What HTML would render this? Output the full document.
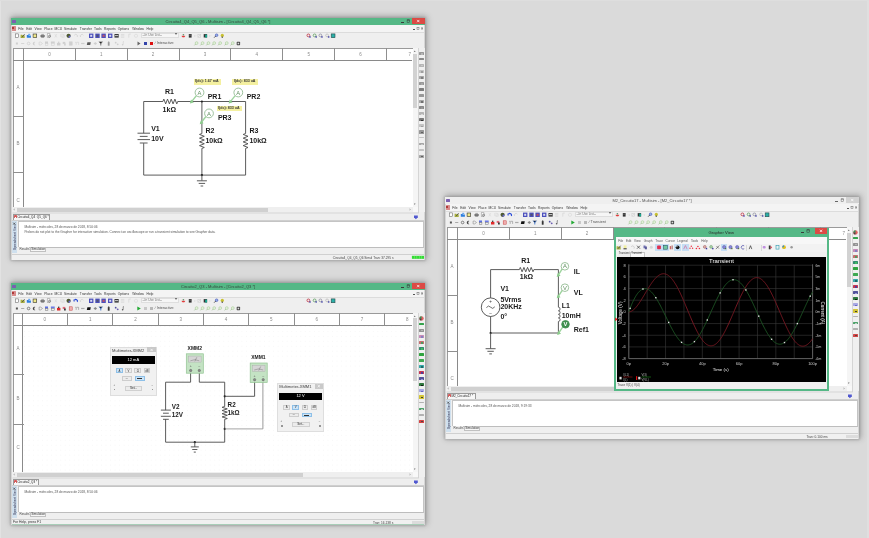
<!DOCTYPE html>
<html><head><meta charset="utf-8"><style>
html,body{margin:0;padding:0;}
body{width:869px;height:538px;overflow:hidden;position:relative;background:#dadada;font-family:"Liberation Sans", sans-serif;}
#ui{position:absolute;left:0;top:0;width:869px;height:538px;will-change:transform;-webkit-font-smoothing:antialiased;}
#ui div{position:absolute;box-sizing:border-box;}
svg{position:absolute;left:0;top:0;}
body > svg{will-change:transform;}
svg text{font-family:"Liberation Sans", sans-serif;}
</style></head><body>
<div id="ui">
<div style="left:866.5px;top:0px;width:2.5px;height:538px;background:#dfdfdf;"></div>
<div style="left:0px;top:0px;width:1.2px;height:538px;background:#e2e2e2;"></div>
<div style="left:0px;top:0px;width:869px;height:1px;background:#dedede;"></div>
<div style="left:11px;top:18px;width:414px;height:242px;background:#f0f0f0;box-shadow:0 0 2px 1px rgba(0,0,0,0.12), 1px -1px 6px 1px rgba(0,0,0,0.26);"></div>
<div style="left:11px;top:18px;width:414px;height:7px;background:#55b886;"></div>
<div style="left:18.0px;width:400px;text-align:center;top:19.82px;font-size:4.05px;line-height:4.05px;color:#35463c;font-weight:normal;white-space:nowrap;">Circuito4_Q4_Q5_Q6 - Multisim - [Circuito4_Q4_Q5_Q6 *]</div>
<div style="left:12.3px;top:19.6px;width:3.4px;height:3.4px;background:#7b5fb0;border-radius:0.6px;"></div>
<div style="left:401px;top:22.0px;width:2.6px;height:0.6px;background:#3a3a3a;"></div>
<div style="left:412px;top:18px;width:12.6px;height:6.0px;background:#dc4a45;"></div>
<div style="left:11px;top:25px;width:414px;height:235px;border:0.6px solid #d6d6d6;border-top:none;box-sizing:border-box;"></div>
<div style="left:12px;top:25px;width:412px;height:6.6px;background:#f4f4f4;"></div>
<div style="left:12.2px;top:26.3px;width:3.6px;height:4.4px;background:#d88a8a;border-radius:0.5px;"></div>
<div style="left:12.4px;top:26.5px;width:2px;height:2.5px;background:#b03a3a;"></div>
<div style="left:18.3px;top:27.71px;font-size:3.3px;line-height:3.3px;color:#333;font-weight:normal;white-space:nowrap;">File</div>
<div style="left:26.3px;top:27.71px;font-size:3.3px;line-height:3.3px;color:#333;font-weight:normal;white-space:nowrap;">Edit</div>
<div style="left:34.6px;top:27.71px;font-size:3.3px;line-height:3.3px;color:#333;font-weight:normal;white-space:nowrap;">View</div>
<div style="left:44.3px;top:27.71px;font-size:3.3px;line-height:3.3px;color:#333;font-weight:normal;white-space:nowrap;">Place</div>
<div style="left:54.5px;top:27.71px;font-size:3.3px;line-height:3.3px;color:#333;font-weight:normal;white-space:nowrap;">MCU</div>
<div style="left:64.1px;top:27.71px;font-size:3.3px;line-height:3.3px;color:#333;font-weight:normal;white-space:nowrap;">Simulate</div>
<div style="left:79.8px;top:27.71px;font-size:3.3px;line-height:3.3px;color:#333;font-weight:normal;white-space:nowrap;">Transfer</div>
<div style="left:94px;top:27.71px;font-size:3.3px;line-height:3.3px;color:#333;font-weight:normal;white-space:nowrap;">Tools</div>
<div style="left:104px;top:27.71px;font-size:3.3px;line-height:3.3px;color:#333;font-weight:normal;white-space:nowrap;">Reports</div>
<div style="left:117.7px;top:27.71px;font-size:3.3px;line-height:3.3px;color:#333;font-weight:normal;white-space:nowrap;">Options</div>
<div style="left:132.2px;top:27.71px;font-size:3.3px;line-height:3.3px;color:#333;font-weight:normal;white-space:nowrap;">Window</div>
<div style="left:146.5px;top:27.71px;font-size:3.3px;line-height:3.3px;color:#333;font-weight:normal;white-space:nowrap;">Help</div>
<div style="left:413px;top:29.4px;width:1.8px;height:0.6px;background:#555;"></div>
<div style="left:12px;top:31.6px;width:412px;height:16px;background:#efefef;"></div>
<div style="left:12px;top:31.6px;width:412px;height:0.6px;background:#dcdcdc;"></div>
<div style="left:140.5px;top:32.6px;width:38px;height:5.6px;background:#f6f6f6;border:0.5px solid #dedede;box-sizing:border-box;"></div>
<div style="left:142.5px;top:33.52px;font-size:3.2px;line-height:3.2px;color:#777;font-weight:normal;white-space:nowrap;">--In Use List--</div>
<div style="left:174.5px;top:33.08px;font-size:3.6px;line-height:3.6px;color:#555;font-weight:normal;white-space:nowrap;">&#9662;</div>
<div style="left:143.5px;top:41.6px;width:3.6px;height:3.6px;background:#3344aa;"></div>
<div style="left:149.5px;top:41.6px;width:3.6px;height:3.6px;background:#dd1111;"></div>
<div style="left:155px;top:41.77px;font-size:3.7px;line-height:3.7px;color:#555;font-weight:normal;white-space:nowrap;">&#8725; Interactive</div>
<div style="left:12px;top:47.6px;width:412px;height:160px;background:#f0f0f0;"></div>
<div style="left:12.5px;top:48px;width:400.29999999999995px;height:158.8px;background:#fff;border:0.8px solid #9a9a9a;border-right:none;border-bottom:none;box-sizing:border-box;"></div>
<div style="left:12.5px;top:59.5px;width:399.9px;height:1px;background:#8a8a8a;"></div>
<div style="left:23.0px;top:48px;width:1px;height:158.8px;background:#8a8a8a;"></div>
<div style="left:23.0px;top:48px;width:1px;height:12px;background:#8f8f8f;"></div>
<div style="left:-150.575px;width:400px;text-align:center;top:53.07px;font-size:4.5px;line-height:4.5px;color:#8a8a8a;font-weight:normal;white-space:nowrap;">0</div>
<div style="left:74.85px;top:48px;width:1px;height:12px;background:#8f8f8f;"></div>
<div style="left:-98.72500000000001px;width:400px;text-align:center;top:53.07px;font-size:4.5px;line-height:4.5px;color:#8a8a8a;font-weight:normal;white-space:nowrap;">1</div>
<div style="left:126.7px;top:48px;width:1px;height:12px;background:#8f8f8f;"></div>
<div style="left:-46.875px;width:400px;text-align:center;top:53.07px;font-size:4.5px;line-height:4.5px;color:#8a8a8a;font-weight:normal;white-space:nowrap;">2</div>
<div style="left:178.55px;top:48px;width:1px;height:12px;background:#8f8f8f;"></div>
<div style="left:4.975000000000023px;width:400px;text-align:center;top:53.07px;font-size:4.5px;line-height:4.5px;color:#8a8a8a;font-weight:normal;white-space:nowrap;">3</div>
<div style="left:230.4px;top:48px;width:1px;height:12px;background:#8f8f8f;"></div>
<div style="left:56.82499999999999px;width:400px;text-align:center;top:53.07px;font-size:4.5px;line-height:4.5px;color:#8a8a8a;font-weight:normal;white-space:nowrap;">4</div>
<div style="left:282.25px;top:48px;width:1px;height:12px;background:#8f8f8f;"></div>
<div style="left:108.67500000000001px;width:400px;text-align:center;top:53.07px;font-size:4.5px;line-height:4.5px;color:#8a8a8a;font-weight:normal;white-space:nowrap;">5</div>
<div style="left:334.1px;top:48px;width:1px;height:12px;background:#8f8f8f;"></div>
<div style="left:160.52500000000003px;width:400px;text-align:center;top:53.07px;font-size:4.5px;line-height:4.5px;color:#8a8a8a;font-weight:normal;white-space:nowrap;">6</div>
<div style="left:385.95px;top:48px;width:1px;height:12px;background:#8f8f8f;"></div>
<div style="left:408.4px;top:53.07px;font-size:4.5px;line-height:4.5px;color:#8a8a8a;font-weight:normal;white-space:nowrap;">7</div>
<div style="left:-182px;width:400px;text-align:center;top:85.77px;font-size:4.5px;line-height:4.5px;color:#8a8a8a;font-weight:normal;white-space:nowrap;">A</div>
<div style="left:12.5px;top:115.9px;width:11px;height:1px;background:#8f8f8f;"></div>
<div style="left:-182px;width:400px;text-align:center;top:142.17px;font-size:4.5px;line-height:4.5px;color:#8a8a8a;font-weight:normal;white-space:nowrap;">B</div>
<div style="left:12.5px;top:172.3px;width:11px;height:1px;background:#8f8f8f;"></div>
<div style="left:-182px;width:400px;text-align:center;top:198.57px;font-size:4.5px;line-height:4.5px;color:#8a8a8a;font-weight:normal;white-space:nowrap;">C</div>
<div style="left:412.8px;top:48px;width:5.6px;height:159px;background:#f5f5f5;"></div>
<div style="left:413.3px;top:53.5px;width:4.2px;height:54.5px;background:#d2d2d2;"></div>
<div style="left:413.6px;top:49.50px;font-size:3.4px;line-height:3.4px;color:#666;font-weight:normal;white-space:nowrap;">&#9652;</div>
<div style="left:413.6px;top:203.20px;font-size:3.4px;line-height:3.4px;color:#666;font-weight:normal;white-space:nowrap;">&#9662;</div>
<div style="left:418px;top:48px;width:7px;height:164px;background:#f0f0f0;"></div>
<div style="left:419.4px;top:51.5px;width:4.2px;height:3.4px;background:#8a8a8a;border-radius:0.5px;opacity:0.85;"></div>
<div style="left:420.6px;top:53.03px;width:2.4px;height:1.53px;background:#bbb;opacity:0.85;"></div>
<div style="left:419.4px;top:58.15px;width:4.2px;height:2.2px;background:#777;border-radius:0.5px;opacity:0.85;"></div>
<div style="left:419.4px;top:63.8px;width:4.2px;height:3px;background:#aaa;border-radius:0.5px;opacity:0.85;"></div>
<div style="left:420.6px;top:65.14999999999999px;width:2.4px;height:1.35px;background:#ccc;opacity:0.85;"></div>
<div style="left:419.4px;top:69.85px;width:4.2px;height:3px;background:#bbb;border-radius:0.5px;opacity:0.85;"></div>
<div style="left:420.6px;top:71.19999999999999px;width:2.4px;height:1.35px;background:#999;opacity:0.85;"></div>
<div style="left:419.4px;top:75.9px;width:4.2px;height:3px;background:#999;border-radius:0.5px;opacity:0.85;"></div>
<div style="left:420.6px;top:77.25px;width:2.4px;height:1.35px;background:#777;opacity:0.85;"></div>
<div style="left:419.4px;top:81.95px;width:4.2px;height:3px;background:#888;border-radius:0.5px;opacity:0.85;"></div>
<div style="left:420.6px;top:83.3px;width:2.4px;height:1.35px;background:#aaa;opacity:0.85;"></div>
<div style="left:419.4px;top:88.2px;width:4.2px;height:2.6px;background:#6a6a6a;border-radius:0.5px;opacity:0.85;"></div>
<div style="left:419.4px;top:94.25000000000001px;width:4.2px;height:2.6px;background:#888;border-radius:0.5px;opacity:0.85;"></div>
<div style="left:419.4px;top:100.0px;width:4.2px;height:3.2px;background:#9a9a9a;border-radius:0.5px;opacity:0.85;"></div>
<div style="left:420.6px;top:101.44px;width:2.4px;height:1.4400000000000002px;background:#666;opacity:0.85;"></div>
<div style="left:419.4px;top:105.95px;width:4.2px;height:3.4px;background:#777;border-radius:0.5px;opacity:0.85;"></div>
<div style="left:420.6px;top:107.48px;width:2.4px;height:1.53px;background:#999;opacity:0.85;"></div>
<div style="left:419.4px;top:112.2px;width:4.2px;height:3px;background:#aaa;border-radius:0.5px;opacity:0.85;"></div>
<div style="left:420.6px;top:113.55px;width:2.4px;height:1.35px;background:#ddd;opacity:0.85;"></div>
<div style="left:419.4px;top:118.35px;width:4.2px;height:2.8px;background:#666;border-radius:0.5px;opacity:0.85;"></div>
<div style="left:420.6px;top:119.61px;width:2.4px;height:1.26px;background:#222;opacity:0.85;"></div>
<div style="left:419.4px;top:124.3px;width:4.2px;height:3px;background:#bbb;border-radius:0.5px;opacity:0.85;"></div>
<div style="left:420.6px;top:125.64999999999999px;width:2.4px;height:1.35px;background:#999;opacity:0.85;"></div>
<div style="left:419.4px;top:130.15px;width:4.2px;height:3.4px;background:#888;border-radius:0.5px;opacity:0.85;"></div>
<div style="left:420.6px;top:131.68px;width:2.4px;height:1.53px;background:#555;opacity:0.85;"></div>
<div style="left:419.4px;top:137.3px;width:4.2px;height:1.2px;background:#bbb;border-radius:0.5px;opacity:0.85;"></div>
<div style="left:419.4px;top:142.95px;width:4.2px;height:2px;background:#999;border-radius:0.5px;opacity:0.85;"></div>
<div style="left:420.6px;top:143.85px;width:2.4px;height:0.9px;background:#ccc;opacity:0.85;"></div>
<div style="left:419.4px;top:149.4px;width:4.2px;height:1.2px;background:#bbb;border-radius:0.5px;opacity:0.85;"></div>
<div style="left:419.4px;top:154.55px;width:4.2px;height:3px;background:#999;border-radius:0.5px;opacity:0.85;"></div>
<div style="left:420.6px;top:155.9px;width:2.4px;height:1.35px;background:#555;opacity:0.85;"></div>
<div style="left:12.5px;top:206.8px;width:405.8px;height:6px;background:#efefef;"></div>
<div style="left:412.8px;top:207px;width:5.4px;height:5.6px;background:#f8f8f8;"></div>
<div style="left:17px;top:207.6px;width:251px;height:4.4px;background:#d0d0d0;"></div>
<div style="left:13.5px;top:207.71px;font-size:4.2px;line-height:4.2px;color:#666;font-weight:normal;white-space:nowrap;">&#8249;</div>
<div style="left:409.2px;top:207.71px;font-size:4.2px;line-height:4.2px;color:#666;font-weight:normal;white-space:nowrap;">&#8250;</div>
<div style="left:12px;top:212px;width:412px;height:8px;background:#eeeeee;"></div>
<div style="left:12px;top:219.8px;width:412px;height:0.6px;background:#cfcfcf;"></div>
<div style="left:13px;top:213.6px;width:37px;height:6.4px;background:#f7f7f7;border:0.6px solid #9a9a9a;border-bottom:none;box-sizing:border-box;"></div>
<div style="left:14px;top:214.5px;width:2.6px;height:3.8px;background:#d45a5a;border-radius:0.4px;"></div>
<div style="left:14.8px;top:216.6px;width:1.6px;height:1.6px;background:#fff;"></div>
<div style="left:17.4px;top:215.64px;font-size:3.05px;line-height:3.05px;color:#1a1a1a;font-weight:normal;white-space:nowrap;">Circuito4_Q4_Q5_Q6 *</div>
<div style="left:12px;top:220.6px;width:412px;height:34px;background:#efefef;"></div>
<div style="left:12px;top:221px;width:4.8px;height:32px;background:#cfe0ee;"></div>
<div style="left:-1.4000000000000004px;top:234.5px;width:31px;height:4px;font-size:3.2px;line-height:4px;color:#224;transform:rotate(-90deg);text-align:center;white-space:nowrap;">Spreadsheet View</div>
<div style="left:18px;top:221px;width:405.5px;height:26.6px;background:#fff;border:0.6px solid #c4c4c4;border-bottom:0.9px solid #bdbdbd;box-sizing:border-box;"></div>
<div style="left:24.4px;top:225.52px;font-size:3.22px;line-height:3.22px;color:#555;font-weight:normal;white-space:nowrap;">Multisim  -  mi&#233;rcoles, 28 de marzo de 2018, 8:50:06</div>
<div style="left:24.4px;top:231.32px;font-size:3.22px;line-height:3.22px;color:#555;font-weight:normal;white-space:nowrap;">Probes do not plot to the Grapher for interactive simulation. Connect an oscilloscope or run a transient simulation to see Grapher data.</div>
<div style="left:18px;top:247.2px;width:11px;height:5px;background:#efefef;"></div>
<div style="left:19.5px;top:248.45px;font-size:3.0px;line-height:3.0px;color:#444;font-weight:normal;white-space:nowrap;">Results</div>
<div style="left:29.5px;top:247px;width:16px;height:5.2px;background:#f7f7f7;border:0.6px solid #c0c0c0;box-sizing:border-box;"></div>
<div style="left:31.2px;top:248.25px;font-size:3.0px;line-height:3.0px;color:#333;font-weight:normal;white-space:nowrap;">Simulation</div>
<div style="left:12px;top:253.9px;width:412px;height:0.8px;background:#d0d0d0;"></div>
<div style="left:12px;top:254.6px;width:412px;height:5.4px;background:#f0f0f0;"></div>
<div style="left:332.8px;top:256.62px;font-size:3.2px;line-height:3.2px;color:#444;font-weight:normal;white-space:nowrap;">Circuito4_Q4_Q5_Q6  Simul Tran: 37.295 s</div>
<div style="left:412px;top:255.7px;width:12.2px;height:3.0px;background:#dcdcdc;"></div>
<div style="left:11px;top:283px;width:414px;height:242px;background:#f0f0f0;box-shadow:0 0 2px 1px rgba(0,0,0,0.12), 1px -1px 6px 1px rgba(0,0,0,0.26);"></div>
<div style="left:11px;top:283px;width:414px;height:7px;background:#55b886;"></div>
<div style="left:18.0px;width:400px;text-align:center;top:284.82px;font-size:4.05px;line-height:4.05px;color:#35463c;font-weight:normal;white-space:nowrap;">Circuito2_Q3 - Multisim - [Circuito2_Q3 *]</div>
<div style="left:12.3px;top:284.6px;width:3.4px;height:3.4px;background:#7b5fb0;border-radius:0.6px;"></div>
<div style="left:401px;top:287.0px;width:2.6px;height:0.6px;background:#3a3a3a;"></div>
<div style="left:412px;top:283px;width:12.6px;height:6.0px;background:#dc4a45;"></div>
<div style="left:11px;top:290px;width:414px;height:235px;border:0.6px solid #d6d6d6;border-top:none;box-sizing:border-box;"></div>
<div style="left:12px;top:290px;width:412px;height:6.6px;background:#f4f4f4;"></div>
<div style="left:12.2px;top:291.3px;width:3.6px;height:4.4px;background:#d88a8a;border-radius:0.5px;"></div>
<div style="left:12.4px;top:291.5px;width:2px;height:2.5px;background:#b03a3a;"></div>
<div style="left:18.3px;top:292.71px;font-size:3.3px;line-height:3.3px;color:#333;font-weight:normal;white-space:nowrap;">File</div>
<div style="left:26.3px;top:292.71px;font-size:3.3px;line-height:3.3px;color:#333;font-weight:normal;white-space:nowrap;">Edit</div>
<div style="left:34.6px;top:292.71px;font-size:3.3px;line-height:3.3px;color:#333;font-weight:normal;white-space:nowrap;">View</div>
<div style="left:44.3px;top:292.71px;font-size:3.3px;line-height:3.3px;color:#333;font-weight:normal;white-space:nowrap;">Place</div>
<div style="left:54.5px;top:292.71px;font-size:3.3px;line-height:3.3px;color:#333;font-weight:normal;white-space:nowrap;">MCU</div>
<div style="left:64.1px;top:292.71px;font-size:3.3px;line-height:3.3px;color:#333;font-weight:normal;white-space:nowrap;">Simulate</div>
<div style="left:79.8px;top:292.71px;font-size:3.3px;line-height:3.3px;color:#333;font-weight:normal;white-space:nowrap;">Transfer</div>
<div style="left:94px;top:292.71px;font-size:3.3px;line-height:3.3px;color:#333;font-weight:normal;white-space:nowrap;">Tools</div>
<div style="left:104px;top:292.71px;font-size:3.3px;line-height:3.3px;color:#333;font-weight:normal;white-space:nowrap;">Reports</div>
<div style="left:117.7px;top:292.71px;font-size:3.3px;line-height:3.3px;color:#333;font-weight:normal;white-space:nowrap;">Options</div>
<div style="left:132.2px;top:292.71px;font-size:3.3px;line-height:3.3px;color:#333;font-weight:normal;white-space:nowrap;">Window</div>
<div style="left:146.5px;top:292.71px;font-size:3.3px;line-height:3.3px;color:#333;font-weight:normal;white-space:nowrap;">Help</div>
<div style="left:413px;top:294.4px;width:1.8px;height:0.6px;background:#555;"></div>
<div style="left:12px;top:296.6px;width:412px;height:16px;background:#efefef;"></div>
<div style="left:12px;top:296.6px;width:412px;height:0.6px;background:#dcdcdc;"></div>
<div style="left:140.5px;top:297.6px;width:38px;height:5.6px;background:#f6f6f6;border:0.5px solid #dedede;box-sizing:border-box;"></div>
<div style="left:142.5px;top:298.52px;font-size:3.2px;line-height:3.2px;color:#777;font-weight:normal;white-space:nowrap;">--In Use List--</div>
<div style="left:174.5px;top:298.08px;font-size:3.6px;line-height:3.6px;color:#555;font-weight:normal;white-space:nowrap;">&#9662;</div>
<div style="left:143.8px;top:306.8px;width:3.2px;height:3.2px;background:#c8c8c8;"></div>
<div style="left:149.8px;top:306.8px;width:3.2px;height:3.2px;background:#b8b8b8;"></div>
<div style="left:155px;top:306.77px;font-size:3.7px;line-height:3.7px;color:#555;font-weight:normal;white-space:nowrap;">&#8725; Interactive</div>
<div style="left:12px;top:312.6px;width:412px;height:160px;background:#f0f0f0;"></div>
<div style="left:12.5px;top:313px;width:400.29999999999995px;height:158.8px;background:#fff;border:0.8px solid #9a9a9a;border-right:none;border-bottom:none;box-sizing:border-box;"></div>
<div style="left:23.5px;top:325.5px;width:387.9px;height:145.8px;"><svg width="387.9" height="145.8"><rect x="0" y="0" width="387.9" height="145.8" fill="url(#gdots)"/></svg></div>
<div style="left:12.5px;top:324.5px;width:399.9px;height:1px;background:#8a8a8a;"></div>
<div style="left:21.7px;top:313px;width:1px;height:158.8px;background:#8a8a8a;"></div>
<div style="left:21.7px;top:313px;width:1px;height:12px;background:#8f8f8f;"></div>
<div style="left:-155.15px;width:400px;text-align:center;top:318.07px;font-size:4.5px;line-height:4.5px;color:#8a8a8a;font-weight:normal;white-space:nowrap;">0</div>
<div style="left:67.0px;top:313px;width:1px;height:12px;background:#8f8f8f;"></div>
<div style="left:-109.85px;width:400px;text-align:center;top:318.07px;font-size:4.5px;line-height:4.5px;color:#8a8a8a;font-weight:normal;white-space:nowrap;">1</div>
<div style="left:112.3px;top:313px;width:1px;height:12px;background:#8f8f8f;"></div>
<div style="left:-64.55000000000001px;width:400px;text-align:center;top:318.07px;font-size:4.5px;line-height:4.5px;color:#8a8a8a;font-weight:normal;white-space:nowrap;">2</div>
<div style="left:157.59999999999997px;top:313px;width:1px;height:12px;background:#8f8f8f;"></div>
<div style="left:-19.25000000000003px;width:400px;text-align:center;top:318.07px;font-size:4.5px;line-height:4.5px;color:#8a8a8a;font-weight:normal;white-space:nowrap;">3</div>
<div style="left:202.89999999999998px;top:313px;width:1px;height:12px;background:#8f8f8f;"></div>
<div style="left:26.049999999999983px;width:400px;text-align:center;top:318.07px;font-size:4.5px;line-height:4.5px;color:#8a8a8a;font-weight:normal;white-space:nowrap;">4</div>
<div style="left:248.2px;top:313px;width:1px;height:12px;background:#8f8f8f;"></div>
<div style="left:71.34999999999997px;width:400px;text-align:center;top:318.07px;font-size:4.5px;line-height:4.5px;color:#8a8a8a;font-weight:normal;white-space:nowrap;">5</div>
<div style="left:293.49999999999994px;top:313px;width:1px;height:12px;background:#8f8f8f;"></div>
<div style="left:116.64999999999992px;width:400px;text-align:center;top:318.07px;font-size:4.5px;line-height:4.5px;color:#8a8a8a;font-weight:normal;white-space:nowrap;">6</div>
<div style="left:338.79999999999995px;top:313px;width:1px;height:12px;background:#8f8f8f;"></div>
<div style="left:161.94999999999993px;width:400px;text-align:center;top:318.07px;font-size:4.5px;line-height:4.5px;color:#8a8a8a;font-weight:normal;white-space:nowrap;">7</div>
<div style="left:384.09999999999997px;top:313px;width:1px;height:12px;background:#8f8f8f;"></div>
<div style="left:207.24999999999994px;width:400px;text-align:center;top:318.07px;font-size:4.5px;line-height:4.5px;color:#8a8a8a;font-weight:normal;white-space:nowrap;">8</div>
<div style="left:-182px;width:400px;text-align:center;top:347.32px;font-size:4.5px;line-height:4.5px;color:#8a8a8a;font-weight:normal;white-space:nowrap;">A</div>
<div style="left:12.5px;top:374.0px;width:11px;height:1px;background:#8f8f8f;"></div>
<div style="left:-182px;width:400px;text-align:center;top:396.82px;font-size:4.5px;line-height:4.5px;color:#8a8a8a;font-weight:normal;white-space:nowrap;">B</div>
<div style="left:12.5px;top:423.5px;width:11px;height:1px;background:#8f8f8f;"></div>
<div style="left:-182px;width:400px;text-align:center;top:446.32px;font-size:4.5px;line-height:4.5px;color:#8a8a8a;font-weight:normal;white-space:nowrap;">C</div>
<div style="left:412.8px;top:313px;width:5.6px;height:159px;background:#f5f5f5;"></div>
<div style="left:413.3px;top:317.5px;width:4.2px;height:63.5px;background:#d2d2d2;"></div>
<div style="left:413.6px;top:314.50px;font-size:3.4px;line-height:3.4px;color:#666;font-weight:normal;white-space:nowrap;">&#9652;</div>
<div style="left:413.6px;top:468.20px;font-size:3.4px;line-height:3.4px;color:#666;font-weight:normal;white-space:nowrap;">&#9662;</div>
<div style="left:418px;top:313px;width:7px;height:164px;background:#f0f0f0;"></div>
<div style="left:419.4px;top:323.15px;width:4.2px;height:2.2px;background:#1f9a3a;border-radius:0.5px;opacity:0.9;"></div>
<div style="left:419.4px;top:328.8px;width:4.2px;height:3px;background:#888;border-radius:0.5px;opacity:0.9;"></div>
<div style="left:420.6px;top:330.15000000000003px;width:2.4px;height:1.35px;background:#bbb;opacity:0.9;"></div>
<div style="left:419.4px;top:334.84999999999997px;width:4.2px;height:3px;background:#c080b0;border-radius:0.5px;opacity:0.9;"></div>
<div style="left:420.6px;top:336.2px;width:2.4px;height:1.35px;background:#8080c0;opacity:0.9;"></div>
<div style="left:419.4px;top:340.9px;width:4.2px;height:3px;background:#c06060;border-radius:0.5px;opacity:0.9;"></div>
<div style="left:420.6px;top:342.25px;width:2.4px;height:1.35px;background:#40a060;opacity:0.9;"></div>
<div style="left:419.4px;top:346.95px;width:4.2px;height:3px;background:#208060;border-radius:0.5px;opacity:0.9;"></div>
<div style="left:420.6px;top:348.3px;width:2.4px;height:1.35px;background:#40c060;opacity:0.9;"></div>
<div style="left:419.4px;top:353.2px;width:4.2px;height:2.6px;background:#1a9a2a;border-radius:0.5px;opacity:0.9;"></div>
<div style="left:419.4px;top:359.25px;width:4.2px;height:2.6px;background:#2aa040;border-radius:0.5px;opacity:0.9;"></div>
<div style="left:419.4px;top:364.99999999999994px;width:4.2px;height:3.2px;background:#20a0a0;border-radius:0.5px;opacity:0.9;"></div>
<div style="left:420.6px;top:366.43999999999994px;width:2.4px;height:1.4400000000000002px;background:#206060;opacity:0.9;"></div>
<div style="left:419.4px;top:370.95px;width:4.2px;height:3.4px;background:#c02040;border-radius:0.5px;opacity:0.9;"></div>
<div style="left:420.6px;top:372.47999999999996px;width:2.4px;height:1.53px;background:#4040a0;opacity:0.9;"></div>
<div style="left:419.4px;top:377.2px;width:4.2px;height:3px;background:#404090;border-radius:0.5px;opacity:0.9;"></div>
<div style="left:420.6px;top:378.55px;width:2.4px;height:1.35px;background:#a0a0e0;opacity:0.9;"></div>
<div style="left:419.4px;top:383.35px;width:4.2px;height:2.8px;background:#1a6a2a;border-radius:0.5px;opacity:0.9;"></div>
<div style="left:420.6px;top:384.61px;width:2.4px;height:1.26px;background:#111;opacity:0.9;"></div>
<div style="left:419.4px;top:389.29999999999995px;width:4.2px;height:3px;background:#a0a0e0;border-radius:0.5px;opacity:0.9;"></div>
<div style="left:420.6px;top:390.65px;width:2.4px;height:1.35px;background:#6060c0;opacity:0.9;"></div>
<div style="left:419.4px;top:395.15px;width:4.2px;height:3.4px;background:#d0c020;border-radius:0.5px;opacity:0.9;"></div>
<div style="left:420.6px;top:396.67999999999995px;width:2.4px;height:1.53px;background:#333;opacity:0.9;"></div>
<div style="left:419.4px;top:402.29999999999995px;width:4.2px;height:1.2px;background:#aaa;border-radius:0.5px;opacity:0.9;"></div>
<div style="left:419.4px;top:407.95px;width:4.2px;height:2px;background:#3a9a5a;border-radius:0.5px;opacity:0.9;"></div>
<div style="left:420.6px;top:408.84999999999997px;width:2.4px;height:0.9px;background:#ccc;opacity:0.9;"></div>
<div style="left:419.4px;top:414.4px;width:4.2px;height:1.2px;background:#aaa;border-radius:0.5px;opacity:0.9;"></div>
<div style="left:419.4px;top:419.54999999999995px;width:4.2px;height:3px;background:#d03030;border-radius:0.5px;opacity:0.9;"></div>
<div style="left:420.6px;top:420.9px;width:2.4px;height:1.35px;background:#444;opacity:0.9;"></div>
<div style="left:12.5px;top:471.8px;width:405.8px;height:6px;background:#efefef;"></div>
<div style="left:412.8px;top:472px;width:5.4px;height:5.6px;background:#f8f8f8;"></div>
<div style="left:17px;top:472.6px;width:286px;height:4.4px;background:#d0d0d0;"></div>
<div style="left:13.5px;top:472.71px;font-size:4.2px;line-height:4.2px;color:#666;font-weight:normal;white-space:nowrap;">&#8249;</div>
<div style="left:409.2px;top:472.71px;font-size:4.2px;line-height:4.2px;color:#666;font-weight:normal;white-space:nowrap;">&#8250;</div>
<div style="left:12px;top:477px;width:412px;height:8px;background:#eeeeee;"></div>
<div style="left:12px;top:484.8px;width:412px;height:0.6px;background:#cfcfcf;"></div>
<div style="left:13px;top:478.6px;width:26.3px;height:6.4px;background:#f7f7f7;border:0.6px solid #9a9a9a;border-bottom:none;box-sizing:border-box;"></div>
<div style="left:14px;top:479.5px;width:2.6px;height:3.8px;background:#d45a5a;border-radius:0.4px;"></div>
<div style="left:14.8px;top:481.6px;width:1.6px;height:1.6px;background:#fff;"></div>
<div style="left:17.4px;top:480.64px;font-size:3.05px;line-height:3.05px;color:#1a1a1a;font-weight:normal;white-space:nowrap;">Circuito2_Q3 *</div>
<div style="left:12px;top:485.6px;width:412px;height:34px;background:#efefef;"></div>
<div style="left:12px;top:486px;width:4.8px;height:32px;background:#cfe0ee;"></div>
<div style="left:-1.4000000000000004px;top:499.5px;width:31px;height:4px;font-size:3.2px;line-height:4px;color:#224;transform:rotate(-90deg);text-align:center;white-space:nowrap;">Spreadsheet View</div>
<div style="left:18px;top:486px;width:405.5px;height:26.6px;background:#fff;border:0.6px solid #c4c4c4;border-bottom:0.9px solid #bdbdbd;box-sizing:border-box;"></div>
<div style="left:24.4px;top:490.52px;font-size:3.22px;line-height:3.22px;color:#555;font-weight:normal;white-space:nowrap;">Multisim  -  mi&#233;rcoles, 28 de marzo de 2018, 8:50:06</div>
<div style="left:18px;top:512.2px;width:11px;height:5px;background:#efefef;"></div>
<div style="left:19.5px;top:513.45px;font-size:3.0px;line-height:3.0px;color:#444;font-weight:normal;white-space:nowrap;">Results</div>
<div style="left:29.5px;top:512px;width:16px;height:5.2px;background:#f7f7f7;border:0.6px solid #c0c0c0;box-sizing:border-box;"></div>
<div style="left:31.2px;top:513.25px;font-size:3.0px;line-height:3.0px;color:#333;font-weight:normal;white-space:nowrap;">Simulation</div>
<div style="left:12px;top:518.9px;width:412px;height:0.8px;background:#d0d0d0;"></div>
<div style="left:12px;top:519.6px;width:412px;height:5.4px;background:#f0f0f0;"></div>
<div style="left:13px;top:521.20px;font-size:3.4px;line-height:3.4px;color:#333;font-weight:normal;white-space:nowrap;">For Help, press F1</div>
<div style="left:372.9px;top:521.62px;font-size:3.2px;line-height:3.2px;color:#444;font-weight:normal;white-space:nowrap;">Tran: 16.138 s</div>
<div style="left:412px;top:520.7px;width:12.2px;height:3.0px;background:#dcdcdc;"></div>
<div style="left:12px;top:524.2px;width:412px;height:0.8px;background:#a8cdb8;"></div>
<div style="left:445px;top:197px;width:414px;height:242px;background:#f0f0f0;box-shadow:0 0 2px 1px rgba(0,0,0,0.12), 1px -1px 6px 1px rgba(0,0,0,0.26);"></div>
<div style="left:445px;top:197px;width:414px;height:7px;background:#efefef;"></div>
<div style="left:452.0px;width:400px;text-align:center;top:198.82px;font-size:4.05px;line-height:4.05px;color:#555;font-weight:normal;white-space:nowrap;">M2_Circuito17 - Multisim - [M2_Circuito17 *]</div>
<div style="left:446.3px;top:198.6px;width:3.4px;height:3.4px;background:#7b5fb0;border-radius:0.6px;"></div>
<div style="left:835px;top:201.0px;width:2.6px;height:0.6px;background:#666;"></div>
<div style="left:846px;top:197px;width:12.6px;height:6.0px;background:#d2d2d2;"></div>
<div style="left:445px;top:204px;width:414px;height:235px;border:0.6px solid #d6d6d6;border-top:none;box-sizing:border-box;"></div>
<div style="left:446px;top:204px;width:412px;height:6.6px;background:#f4f4f4;"></div>
<div style="left:446.2px;top:205.3px;width:3.6px;height:4.4px;background:#d88a8a;border-radius:0.5px;"></div>
<div style="left:446.4px;top:205.5px;width:2px;height:2.5px;background:#b03a3a;"></div>
<div style="left:452.3px;top:206.71px;font-size:3.3px;line-height:3.3px;color:#333;font-weight:normal;white-space:nowrap;">File</div>
<div style="left:460.3px;top:206.71px;font-size:3.3px;line-height:3.3px;color:#333;font-weight:normal;white-space:nowrap;">Edit</div>
<div style="left:468.6px;top:206.71px;font-size:3.3px;line-height:3.3px;color:#333;font-weight:normal;white-space:nowrap;">View</div>
<div style="left:478.3px;top:206.71px;font-size:3.3px;line-height:3.3px;color:#333;font-weight:normal;white-space:nowrap;">Place</div>
<div style="left:488.5px;top:206.71px;font-size:3.3px;line-height:3.3px;color:#333;font-weight:normal;white-space:nowrap;">MCU</div>
<div style="left:498.1px;top:206.71px;font-size:3.3px;line-height:3.3px;color:#333;font-weight:normal;white-space:nowrap;">Simulate</div>
<div style="left:513.8px;top:206.71px;font-size:3.3px;line-height:3.3px;color:#333;font-weight:normal;white-space:nowrap;">Transfer</div>
<div style="left:528px;top:206.71px;font-size:3.3px;line-height:3.3px;color:#333;font-weight:normal;white-space:nowrap;">Tools</div>
<div style="left:538px;top:206.71px;font-size:3.3px;line-height:3.3px;color:#333;font-weight:normal;white-space:nowrap;">Reports</div>
<div style="left:551.7px;top:206.71px;font-size:3.3px;line-height:3.3px;color:#333;font-weight:normal;white-space:nowrap;">Options</div>
<div style="left:566.2px;top:206.71px;font-size:3.3px;line-height:3.3px;color:#333;font-weight:normal;white-space:nowrap;">Window</div>
<div style="left:580.5px;top:206.71px;font-size:3.3px;line-height:3.3px;color:#333;font-weight:normal;white-space:nowrap;">Help</div>
<div style="left:847px;top:208.4px;width:1.8px;height:0.6px;background:#555;"></div>
<div style="left:446px;top:210.6px;width:412px;height:16px;background:#efefef;"></div>
<div style="left:446px;top:210.6px;width:412px;height:0.6px;background:#dcdcdc;"></div>
<div style="left:574.5px;top:211.6px;width:38px;height:5.6px;background:#f6f6f6;border:0.5px solid #dedede;box-sizing:border-box;"></div>
<div style="left:576.5px;top:212.52px;font-size:3.2px;line-height:3.2px;color:#777;font-weight:normal;white-space:nowrap;">--In Use List--</div>
<div style="left:608.5px;top:212.08px;font-size:3.6px;line-height:3.6px;color:#555;font-weight:normal;white-space:nowrap;">&#9662;</div>
<div style="left:577.8px;top:220.8px;width:3.2px;height:3.2px;background:#c8c8c8;"></div>
<div style="left:583.8px;top:220.8px;width:3.2px;height:3.2px;background:#b8b8b8;"></div>
<div style="left:589px;top:220.77px;font-size:3.7px;line-height:3.7px;color:#555;font-weight:normal;white-space:nowrap;">&#8725; Transient</div>
<div style="left:446px;top:226.6px;width:412px;height:160px;background:#f0f0f0;"></div>
<div style="left:446.5px;top:227px;width:400.29999999999995px;height:158.8px;background:#fff;border:0.8px solid #9a9a9a;border-right:none;border-bottom:none;box-sizing:border-box;"></div>
<div style="left:446.5px;top:238.5px;width:399.9px;height:1px;background:#8a8a8a;"></div>
<div style="left:457.0px;top:227px;width:1px;height:158.8px;background:#8a8a8a;"></div>
<div style="left:457.0px;top:227px;width:1px;height:12px;background:#8f8f8f;"></div>
<div style="left:283.425px;width:400px;text-align:center;top:232.07px;font-size:4.5px;line-height:4.5px;color:#8a8a8a;font-weight:normal;white-space:nowrap;">0</div>
<div style="left:508.85px;top:227px;width:1px;height:12px;background:#8f8f8f;"></div>
<div style="left:335.275px;width:400px;text-align:center;top:232.07px;font-size:4.5px;line-height:4.5px;color:#8a8a8a;font-weight:normal;white-space:nowrap;">1</div>
<div style="left:560.7px;top:227px;width:1px;height:12px;background:#8f8f8f;"></div>
<div style="left:387.125px;width:400px;text-align:center;top:232.07px;font-size:4.5px;line-height:4.5px;color:#8a8a8a;font-weight:normal;white-space:nowrap;">2</div>
<div style="left:612.55px;top:227px;width:1px;height:12px;background:#8f8f8f;"></div>
<div style="left:438.9749999999999px;width:400px;text-align:center;top:232.07px;font-size:4.5px;line-height:4.5px;color:#8a8a8a;font-weight:normal;white-space:nowrap;">3</div>
<div style="left:664.4px;top:227px;width:1px;height:12px;background:#8f8f8f;"></div>
<div style="left:490.82499999999993px;width:400px;text-align:center;top:232.07px;font-size:4.5px;line-height:4.5px;color:#8a8a8a;font-weight:normal;white-space:nowrap;">4</div>
<div style="left:716.25px;top:227px;width:1px;height:12px;background:#8f8f8f;"></div>
<div style="left:542.675px;width:400px;text-align:center;top:232.07px;font-size:4.5px;line-height:4.5px;color:#8a8a8a;font-weight:normal;white-space:nowrap;">5</div>
<div style="left:768.1px;top:227px;width:1px;height:12px;background:#8f8f8f;"></div>
<div style="left:594.525px;width:400px;text-align:center;top:232.07px;font-size:4.5px;line-height:4.5px;color:#8a8a8a;font-weight:normal;white-space:nowrap;">6</div>
<div style="left:819.95px;top:227px;width:1px;height:12px;background:#8f8f8f;"></div>
<div style="left:842.4px;top:232.07px;font-size:4.5px;line-height:4.5px;color:#8a8a8a;font-weight:normal;white-space:nowrap;">7</div>
<div style="left:252px;width:400px;text-align:center;top:264.72px;font-size:4.5px;line-height:4.5px;color:#8a8a8a;font-weight:normal;white-space:nowrap;">A</div>
<div style="left:446.5px;top:294.8px;width:11px;height:1px;background:#8f8f8f;"></div>
<div style="left:252px;width:400px;text-align:center;top:321.02px;font-size:4.5px;line-height:4.5px;color:#8a8a8a;font-weight:normal;white-space:nowrap;">B</div>
<div style="left:446.5px;top:351.1px;width:11px;height:1px;background:#8f8f8f;"></div>
<div style="left:252px;width:400px;text-align:center;top:377.32px;font-size:4.5px;line-height:4.5px;color:#8a8a8a;font-weight:normal;white-space:nowrap;">C</div>
<div style="left:846.8px;top:227px;width:5.6px;height:159px;background:#f5f5f5;"></div>
<div style="left:847.3px;top:232.5px;width:4.2px;height:54.5px;background:#d2d2d2;"></div>
<div style="left:847.6px;top:228.50px;font-size:3.4px;line-height:3.4px;color:#666;font-weight:normal;white-space:nowrap;">&#9652;</div>
<div style="left:847.6px;top:382.20px;font-size:3.4px;line-height:3.4px;color:#666;font-weight:normal;white-space:nowrap;">&#9662;</div>
<div style="left:852px;top:227px;width:7px;height:164px;background:#f0f0f0;"></div>
<div style="left:853.4px;top:237.15px;width:4.2px;height:2.2px;background:#1f9a3a;border-radius:0.5px;opacity:0.9;"></div>
<div style="left:853.4px;top:242.79999999999998px;width:4.2px;height:3px;background:#888;border-radius:0.5px;opacity:0.9;"></div>
<div style="left:854.6px;top:244.14999999999998px;width:2.4px;height:1.35px;background:#bbb;opacity:0.9;"></div>
<div style="left:853.4px;top:248.85px;width:4.2px;height:3px;background:#c080b0;border-radius:0.5px;opacity:0.9;"></div>
<div style="left:854.6px;top:250.2px;width:2.4px;height:1.35px;background:#8080c0;opacity:0.9;"></div>
<div style="left:853.4px;top:254.89999999999998px;width:4.2px;height:3px;background:#c06060;border-radius:0.5px;opacity:0.9;"></div>
<div style="left:854.6px;top:256.25px;width:2.4px;height:1.35px;background:#40a060;opacity:0.9;"></div>
<div style="left:853.4px;top:260.95px;width:4.2px;height:3px;background:#208060;border-radius:0.5px;opacity:0.9;"></div>
<div style="left:854.6px;top:262.3px;width:2.4px;height:1.35px;background:#40c060;opacity:0.9;"></div>
<div style="left:853.4px;top:267.2px;width:4.2px;height:2.6px;background:#1a9a2a;border-radius:0.5px;opacity:0.9;"></div>
<div style="left:853.4px;top:273.25px;width:4.2px;height:2.6px;background:#2aa040;border-radius:0.5px;opacity:0.9;"></div>
<div style="left:853.4px;top:278.99999999999994px;width:4.2px;height:3.2px;background:#20a0a0;border-radius:0.5px;opacity:0.9;"></div>
<div style="left:854.6px;top:280.43999999999994px;width:2.4px;height:1.4400000000000002px;background:#206060;opacity:0.9;"></div>
<div style="left:853.4px;top:284.95px;width:4.2px;height:3.4px;background:#c02040;border-radius:0.5px;opacity:0.9;"></div>
<div style="left:854.6px;top:286.47999999999996px;width:2.4px;height:1.53px;background:#4040a0;opacity:0.9;"></div>
<div style="left:853.4px;top:291.2px;width:4.2px;height:3px;background:#404090;border-radius:0.5px;opacity:0.9;"></div>
<div style="left:854.6px;top:292.55px;width:2.4px;height:1.35px;background:#a0a0e0;opacity:0.9;"></div>
<div style="left:853.4px;top:297.35px;width:4.2px;height:2.8px;background:#1a6a2a;border-radius:0.5px;opacity:0.9;"></div>
<div style="left:854.6px;top:298.61px;width:2.4px;height:1.26px;background:#111;opacity:0.9;"></div>
<div style="left:853.4px;top:303.29999999999995px;width:4.2px;height:3px;background:#a0a0e0;border-radius:0.5px;opacity:0.9;"></div>
<div style="left:854.6px;top:304.65px;width:2.4px;height:1.35px;background:#6060c0;opacity:0.9;"></div>
<div style="left:853.4px;top:309.15px;width:4.2px;height:3.4px;background:#d0c020;border-radius:0.5px;opacity:0.9;"></div>
<div style="left:854.6px;top:310.67999999999995px;width:2.4px;height:1.53px;background:#333;opacity:0.9;"></div>
<div style="left:853.4px;top:316.29999999999995px;width:4.2px;height:1.2px;background:#aaa;border-radius:0.5px;opacity:0.9;"></div>
<div style="left:853.4px;top:321.95px;width:4.2px;height:2px;background:#3a9a5a;border-radius:0.5px;opacity:0.9;"></div>
<div style="left:854.6px;top:322.84999999999997px;width:2.4px;height:0.9px;background:#ccc;opacity:0.9;"></div>
<div style="left:853.4px;top:328.4px;width:4.2px;height:1.2px;background:#aaa;border-radius:0.5px;opacity:0.9;"></div>
<div style="left:853.4px;top:333.54999999999995px;width:4.2px;height:3px;background:#d03030;border-radius:0.5px;opacity:0.9;"></div>
<div style="left:854.6px;top:334.9px;width:2.4px;height:1.35px;background:#444;opacity:0.9;"></div>
<div style="left:446.5px;top:385.8px;width:405.8px;height:6px;background:#efefef;"></div>
<div style="left:846.8px;top:386px;width:5.4px;height:5.6px;background:#f8f8f8;"></div>
<div style="left:451px;top:386.6px;width:251px;height:4.4px;background:#d0d0d0;"></div>
<div style="left:447.5px;top:386.71px;font-size:4.2px;line-height:4.2px;color:#666;font-weight:normal;white-space:nowrap;">&#8249;</div>
<div style="left:843.2px;top:386.71px;font-size:4.2px;line-height:4.2px;color:#666;font-weight:normal;white-space:nowrap;">&#8250;</div>
<div style="left:446px;top:391px;width:412px;height:8px;background:#eeeeee;"></div>
<div style="left:446px;top:398.8px;width:412px;height:0.6px;background:#cfcfcf;"></div>
<div style="left:447px;top:392.6px;width:28.7px;height:6.4px;background:#f7f7f7;border:0.6px solid #9a9a9a;border-bottom:none;box-sizing:border-box;"></div>
<div style="left:448px;top:393.5px;width:2.6px;height:3.8px;background:#d45a5a;border-radius:0.4px;"></div>
<div style="left:448.8px;top:395.6px;width:1.6px;height:1.6px;background:#fff;"></div>
<div style="left:451.4px;top:394.64px;font-size:3.05px;line-height:3.05px;color:#1a1a1a;font-weight:normal;white-space:nowrap;">M2_Circuito17 *</div>
<div style="left:446px;top:399.6px;width:412px;height:34px;background:#efefef;"></div>
<div style="left:446px;top:400px;width:4.8px;height:32px;background:#cfe0ee;"></div>
<div style="left:432.6px;top:413.5px;width:31px;height:4px;font-size:3.2px;line-height:4px;color:#224;transform:rotate(-90deg);text-align:center;white-space:nowrap;">Spreadsheet View</div>
<div style="left:452px;top:400px;width:405.5px;height:26.6px;background:#fff;border:0.6px solid #c4c4c4;border-bottom:0.9px solid #bdbdbd;box-sizing:border-box;"></div>
<div style="left:458.4px;top:404.52px;font-size:3.22px;line-height:3.22px;color:#555;font-weight:normal;white-space:nowrap;">Multisim  -  mi&#233;rcoles, 28 de marzo de 2018, 9:19:33</div>
<div style="left:452px;top:426.2px;width:11px;height:5px;background:#efefef;"></div>
<div style="left:453.5px;top:427.45px;font-size:3.0px;line-height:3.0px;color:#444;font-weight:normal;white-space:nowrap;">Results</div>
<div style="left:463.5px;top:426px;width:16px;height:5.2px;background:#f7f7f7;border:0.6px solid #c0c0c0;box-sizing:border-box;"></div>
<div style="left:465.2px;top:427.25px;font-size:3.0px;line-height:3.0px;color:#333;font-weight:normal;white-space:nowrap;">Simulation</div>
<div style="left:446px;top:432.9px;width:412px;height:0.8px;background:#d0d0d0;"></div>
<div style="left:446px;top:433.6px;width:412px;height:5.4px;background:#f0f0f0;"></div>
<div style="left:806.4px;top:435.62px;font-size:3.2px;line-height:3.2px;color:#444;font-weight:normal;white-space:nowrap;">Tran: 0.100 ms</div>
<div style="left:846px;top:434.7px;width:12.2px;height:3.0px;background:#dcdcdc;"></div>
<div style="left:193.5px;top:79.4px;width:27.19999999999999px;height:5.3999999999999915px;background:#f4f0a0;"></div>
<div style="left:195.1px;top:80.28px;font-size:3.6px;line-height:3.6px;color:#333;font-weight:bold;white-space:nowrap;">I(dc): 1.67 mA</div>
<div style="left:232.3px;top:79.4px;width:26.0px;height:5.3999999999999915px;background:#f4f0a0;"></div>
<div style="left:233.9px;top:80.28px;font-size:3.6px;line-height:3.6px;color:#333;font-weight:bold;white-space:nowrap;">I(dc): 833 uA</div>
<div style="left:216.5px;top:105.9px;width:25.5px;height:5.3999999999999915px;background:#f4f0a0;"></div>
<div style="left:218.1px;top:106.78px;font-size:3.6px;line-height:3.6px;color:#333;font-weight:bold;white-space:nowrap;">I(dc): 833 uA</div>
<div style="left:109.6px;top:346.7px;width:47px;height:49.5px;background:#f1f1f1;border:0.6px solid #dedede;"></div>
<div style="left:112.0px;top:348.72px;font-size:4.1px;line-height:4.1px;color:#444;font-weight:normal;white-space:nowrap;">Multimeter-XMM2</div>
<div style="left:147.39999999999998px;top:347.3px;width:8.4px;height:5.1px;background:#c9c9c9;"></div>
<div style="left:112.0px;top:356.3px;width:42.7px;height:7.3px;background:#000;"></div>
<div style="left:-66.70000000000002px;width:400px;text-align:center;top:357.63px;font-size:4.0px;line-height:4.0px;color:#fff;font-weight:normal;white-space:nowrap;">12 mA</div>
<div style="left:116.1px;top:368.3px;width:6.6px;height:5.2px;background:#cce4f7;border:0.5px solid #8ec0e8;"></div>
<div style="left:-80.60000000000001px;width:400px;text-align:center;top:369.77px;font-size:2.8px;line-height:2.8px;color:#333;font-weight:normal;white-space:nowrap;">A</div>
<div style="left:125.1px;top:368.3px;width:6.6px;height:5.2px;background:#ececec;border:0.5px solid #cdcdcd;"></div>
<div style="left:-71.6px;width:400px;text-align:center;top:369.77px;font-size:2.8px;line-height:2.8px;color:#333;font-weight:normal;white-space:nowrap;">V</div>
<div style="left:134.4px;top:368.3px;width:6.6px;height:5.2px;background:#ececec;border:0.5px solid #cdcdcd;"></div>
<div style="left:-62.29999999999998px;width:400px;text-align:center;top:369.77px;font-size:2.8px;line-height:2.8px;color:#333;font-weight:normal;white-space:nowrap;">&#937;</div>
<div style="left:143.7px;top:368.3px;width:6.6px;height:5.2px;background:#ececec;border:0.5px solid #cdcdcd;"></div>
<div style="left:-53.0px;width:400px;text-align:center;top:369.77px;font-size:2.8px;line-height:2.8px;color:#333;font-weight:normal;white-space:nowrap;">dB</div>
<div style="left:121.6px;top:376.3px;width:10px;height:4.5px;background:#ececec;border:0.5px solid #cdcdcd;"></div>
<div style="left:-73.4px;width:400px;text-align:center;top:376.81px;font-size:4.2px;line-height:4.2px;color:#333;font-weight:normal;white-space:nowrap;">~</div>
<div style="left:134.6px;top:376.3px;width:10px;height:4.5px;background:#cce4f7;border:0.5px solid #8ec0e8;"></div>
<div style="left:137.1px;top:378.4px;width:5px;height:0.6px;background:#333;"></div>
<div style="left:125.1px;top:385.7px;width:17.3px;height:5px;background:#ececec;border:0.5px solid #d0d0d0;"></div>
<div style="left:-66.4px;width:400px;text-align:center;top:386.85px;font-size:3.0px;line-height:3.0px;color:#222;font-weight:normal;white-space:nowrap;">Set...</div>
<div style="left:113.39999999999999px;top:384.99px;font-size:2.6px;line-height:2.6px;color:#555;font-weight:normal;white-space:nowrap;">+</div>
<div style="left:113.6px;top:388.7px;width:1.8px;height:1.8px;background:#777;border-radius:1px;"></div>
<div style="left:151.6px;top:384.99px;font-size:2.6px;line-height:2.6px;color:#555;font-weight:normal;white-space:nowrap;">&#8211;</div>
<div style="left:151.6px;top:388.7px;width:1.8px;height:1.8px;background:#777;border-radius:1px;"></div>
<div style="left:276.8px;top:382.9px;width:47px;height:49.5px;background:#f1f1f1;border:0.6px solid #dedede;"></div>
<div style="left:279.2px;top:384.92px;font-size:4.1px;line-height:4.1px;color:#444;font-weight:normal;white-space:nowrap;">Multimeter-XMM1</div>
<div style="left:314.6px;top:383.5px;width:8.4px;height:5.1px;background:#c9c9c9;"></div>
<div style="left:279.2px;top:392.5px;width:42.7px;height:7.3px;background:#000;"></div>
<div style="left:100.5px;width:400px;text-align:center;top:393.83px;font-size:4.0px;line-height:4.0px;color:#fff;font-weight:normal;white-space:nowrap;">12 V</div>
<div style="left:283.3px;top:404.5px;width:6.6px;height:5.2px;background:#ececec;border:0.5px solid #cdcdcd;"></div>
<div style="left:86.60000000000002px;width:400px;text-align:center;top:405.97px;font-size:2.8px;line-height:2.8px;color:#333;font-weight:normal;white-space:nowrap;">A</div>
<div style="left:292.3px;top:404.5px;width:6.6px;height:5.2px;background:#cce4f7;border:0.5px solid #8ec0e8;"></div>
<div style="left:95.60000000000002px;width:400px;text-align:center;top:405.97px;font-size:2.8px;line-height:2.8px;color:#333;font-weight:normal;white-space:nowrap;">V</div>
<div style="left:301.6px;top:404.5px;width:6.6px;height:5.2px;background:#ececec;border:0.5px solid #cdcdcd;"></div>
<div style="left:104.90000000000003px;width:400px;text-align:center;top:405.97px;font-size:2.8px;line-height:2.8px;color:#333;font-weight:normal;white-space:nowrap;">&#937;</div>
<div style="left:310.90000000000003px;top:404.5px;width:6.6px;height:5.2px;background:#ececec;border:0.5px solid #cdcdcd;"></div>
<div style="left:114.20000000000005px;width:400px;text-align:center;top:405.97px;font-size:2.8px;line-height:2.8px;color:#333;font-weight:normal;white-space:nowrap;">dB</div>
<div style="left:288.8px;top:412.5px;width:10px;height:4.5px;background:#ececec;border:0.5px solid #cdcdcd;"></div>
<div style="left:93.80000000000001px;width:400px;text-align:center;top:413.01px;font-size:4.2px;line-height:4.2px;color:#333;font-weight:normal;white-space:nowrap;">~</div>
<div style="left:301.8px;top:412.5px;width:10px;height:4.5px;background:#cce4f7;border:0.5px solid #8ec0e8;"></div>
<div style="left:304.3px;top:414.59999999999997px;width:5px;height:0.6px;background:#333;"></div>
<div style="left:292.3px;top:421.9px;width:17.3px;height:5px;background:#ececec;border:0.5px solid #d0d0d0;"></div>
<div style="left:100.80000000000001px;width:400px;text-align:center;top:423.05px;font-size:3.0px;line-height:3.0px;color:#222;font-weight:normal;white-space:nowrap;">Set...</div>
<div style="left:280.6px;top:421.19px;font-size:2.6px;line-height:2.6px;color:#555;font-weight:normal;white-space:nowrap;">+</div>
<div style="left:280.8px;top:424.9px;width:1.8px;height:1.8px;background:#777;border-radius:1px;"></div>
<div style="left:318.8px;top:421.19px;font-size:2.6px;line-height:2.6px;color:#555;font-weight:normal;white-space:nowrap;">&#8211;</div>
<div style="left:318.8px;top:424.9px;width:1.8px;height:1.8px;background:#777;border-radius:1px;"></div>
<div style="left:613.5px;top:227.8px;width:215.5px;height:163.2px;background:#f0f0f0;border:2.2px solid #55b886;box-sizing:border-box;"></div>
<div style="left:613.5px;top:227.8px;width:215.5px;height:9.4px;background:#55b886;"></div>
<div style="left:521.25px;width:400px;text-align:center;top:230.51px;font-size:4.2px;line-height:4.2px;color:#2a2a2a;font-weight:normal;white-space:nowrap;">Grapher View</div>
<div style="left:815.0px;top:227.8px;width:12.2px;height:6.2px;background:#dc4a45;"></div>
<div style="left:801px;top:232.0px;width:2.6px;height:0.6px;background:#3a3a3a;"></div>
<div style="left:615.7px;top:237.20000000000002px;width:211.1px;height:6.4px;background:#f7f7f7;"></div>
<div style="left:618.3px;top:239.64px;font-size:3.1px;line-height:3.1px;color:#555;font-weight:normal;white-space:nowrap;">File</div>
<div style="left:626.1px;top:239.64px;font-size:3.1px;line-height:3.1px;color:#555;font-weight:normal;white-space:nowrap;">Edit</div>
<div style="left:634px;top:239.64px;font-size:3.1px;line-height:3.1px;color:#555;font-weight:normal;white-space:nowrap;">View</div>
<div style="left:643.8px;top:239.64px;font-size:3.1px;line-height:3.1px;color:#555;font-weight:normal;white-space:nowrap;">Graph</div>
<div style="left:655.2px;top:239.64px;font-size:3.1px;line-height:3.1px;color:#555;font-weight:normal;white-space:nowrap;">Trace</div>
<div style="left:665.6px;top:239.64px;font-size:3.1px;line-height:3.1px;color:#555;font-weight:normal;white-space:nowrap;">Cursor</div>
<div style="left:677.2px;top:239.64px;font-size:3.1px;line-height:3.1px;color:#555;font-weight:normal;white-space:nowrap;">Legend</div>
<div style="left:690.9px;top:239.64px;font-size:3.1px;line-height:3.1px;color:#555;font-weight:normal;white-space:nowrap;">Tools</div>
<div style="left:701.3px;top:239.64px;font-size:3.1px;line-height:3.1px;color:#555;font-weight:normal;white-space:nowrap;">Help</div>
<div style="left:615.7px;top:244px;width:211.1px;height:8px;background:#f2f2f2;"></div>
<div style="left:655.4px;top:244.2px;width:13.200000000000045px;height:6.4px;background:#c6def4;"></div>
<div style="left:673.7px;top:244.2px;width:7.2999999999999545px;height:6.4px;background:#c6def4;"></div>
<div style="left:682px;top:244.2px;width:6.600000000000023px;height:6.4px;background:#c6def4;"></div>
<div style="left:721px;top:244.2px;width:6.2000000000000455px;height:6.4px;background:#c6def4;"></div>
<div style="left:760.6px;top:244.6px;width:0.5px;height:6px;background:#d8d8d8;"></div>
<div style="left:746.4px;top:244.6px;width:0.5px;height:6px;background:#d8d8d8;"></div>
<div style="left:617.7px;top:252.2px;width:12px;height:4.8px;background:#ececec;"></div>
<div style="left:618.8px;top:253.29px;font-size:2.6px;line-height:2.6px;color:#333;font-weight:normal;white-space:nowrap;">Transient</div>
<div style="left:629.7px;top:251.8px;width:15.3px;height:5.2px;background:#f8f8f8;border:0.5px solid #c4c4c4;border-bottom:none;"></div>
<div style="left:631.3px;top:253.09px;font-size:2.6px;line-height:2.6px;color:#333;font-weight:normal;white-space:nowrap;">Transient</div>
<div style="left:616.6px;top:257.0px;width:209.79999999999995px;height:125.0px;background:#000;"></div>
<div style="left:617.5px;top:383.95px;font-size:3.0px;line-height:3.0px;color:#444;font-weight:normal;white-space:nowrap;">Trace V(1) | V(4)</div>
</div>
<svg width="869" height="538" viewBox="0 0 869 538">
<defs><pattern id="gdots" x="0" y="0" width="4.53" height="4.95" patternUnits="userSpaceOnUse"><rect x="0" y="0" width="0.9" height="0.9" fill="#f7f7f7"/></pattern></defs>
<rect x="407.1" y="19.9" width="2.6" height="2.4" fill="none" stroke="#3a3a3a" stroke-width="0.5"/><rect x="407.1" y="19.7" width="2.6" height="0.7" fill="#3a3a3a"/>
<path d="M417.1 19.9 l2.3 2.3 M419.4 19.9 l-2.3 2.3" stroke="#fff" stroke-width="0.75"/>
<rect x="417" y="27.4" width="2" height="2" fill="none" stroke="#555" stroke-width="0.45"/>
<path d="M421.1 27.5 l1.9 1.9 M423.0 27.5 l-1.9 1.9" stroke="#444" stroke-width="0.6"/>
<g transform="translate(14.80,33.60)"><rect x="0.6" y="0.3" width="3" height="3.8" fill="#fff" stroke="#555" stroke-width="0.5"/></g>
<g transform="translate(20.40,33.60)"><path d="M0.2 1.2 h1.6 l0.5 0.5 h2 v2.6 h-4.1z" fill="#a9b040"/><path d="M1.6 3.6 L4.2 0.6" stroke="#444" stroke-width="0.8"/></g>
<g transform="translate(26.60,33.60)"><path d="M0.2 1.4 h1.6 l0.5 0.5 h2 v2.3 h-4.1z" fill="#2d7fe0"/><rect x="1.6" y="0.2" width="2" height="1.2" fill="#6aa8f0"/></g>
<g transform="translate(32.70,33.60)"><rect x="0.4" y="0.4" width="3.6" height="3.6" fill="#efe98a" stroke="#333" stroke-width="0.6"/></g>
<g transform="translate(40.30,33.60)"><rect x="0.2" y="1.4" width="4.2" height="2.2" rx="0.6" fill="#6e6e6e"/><rect x="1" y="0.3" width="2.6" height="1.4" fill="#aaa"/><rect x="1" y="3.2" width="2.6" height="1" fill="#999"/></g>
<g transform="translate(46.60,33.60)"><rect x="0.6" y="0.2" width="2.8" height="3.9" fill="#fff" stroke="#777" stroke-width="0.45"/><circle cx="2.9" cy="2.6" r="1" fill="none" stroke="#555" stroke-width="0.6"/></g>
<g transform="translate(53.80,33.60)"><path d="M1 0.5 L3 3.8 M3 0.5 L1 3.8" stroke="#d6d6d6" stroke-width="0.6"/></g>
<g transform="translate(60.30,33.60)"><rect x="0.5" y="0.5" width="2.4" height="2.8" fill="none" stroke="#d8d8d8" stroke-width="0.5"/><rect x="1.6" y="1.3" width="2.4" height="2.8" fill="none" stroke="#d8d8d8" stroke-width="0.5"/></g>
<g transform="translate(66.40,33.60)"><circle cx="2.2" cy="2.2" r="2.1" fill="#4e5a30"/><path d="M2.2 2.2 L4.3 2.2 A2.1 2.1 0 0 1 2.2 4.3z" fill="#6a6ad8"/></g>
<g transform="translate(73.40,33.60)"><path d="M3.8 3.4 A1.6 1.6 0 0 0 1 1.6" stroke="#d2d2d2" stroke-width="0.9" fill="none"/></g>
<g transform="translate(80.00,33.60)"><path d="M0.6 3.4 A1.6 1.6 0 0 1 3.4 1.6" stroke="#d4d4d4" stroke-width="0.9" fill="none"/></g>
<g transform="translate(89.00,33.60)"><rect x="0" y="0" width="4.4" height="4.4" fill="#4b4fbc"/><rect x="1.2" y="1.2" width="2" height="2" fill="#fff" opacity="0.8"/></g>
<g transform="translate(95.30,33.60)"><rect x="0" y="0" width="4.4" height="4.4" fill="#4b4fbc"/><rect x="1.2" y="1.2" width="2" height="2" fill="#555" opacity="0.8"/></g>
<g transform="translate(101.40,33.60)"><rect x="0" y="0" width="4.4" height="4.4" fill="#4b4fbc"/><rect x="1.2" y="1.2" width="2" height="2" fill="#e05050" opacity="0.8"/></g>
<g transform="translate(108.00,33.60)"><rect x="0" y="0" width="4.4" height="4.4" fill="#4b4fbc"/><rect x="1.2" y="1.2" width="2" height="2" fill="#fff" opacity="0.8"/></g>
<g transform="translate(114.40,33.60)"><rect x="0.1" y="0.4" width="4.2" height="3.6" fill="#3a3a3a"/><rect x="0.6" y="1.6" width="3.2" height="0.9" fill="#ddd"/></g>
<g transform="translate(120.40,33.60)"><path d="M0.5 0.8 h3.4 M0.5 2.2 h3.4 M0.5 3.6 h3.4" stroke="#d0d0d0" stroke-width="0.6"/></g>
<g transform="translate(127.80,33.60)"><path d="M1 0.5 v3.5 M1 0.5 h2" stroke="#d4d4d4" stroke-width="0.7"/></g>
<g transform="translate(133.80,33.60)"><circle cx="2.2" cy="2.2" r="1.6" fill="none" stroke="#d6d6d6" stroke-width="0.6"/></g>
<g transform="translate(181.20,33.60)"><circle cx="2.2" cy="2.3" r="1.9" fill="#f2c8c8"/><path d="M0.4 2.4 A1.9 1.9 0 0 0 4 2.4z" fill="#e03a3a"/><rect x="1.6" y="0.6" width="1.2" height="1.2" fill="#3a9a6a"/></g>
<g transform="translate(188.00,33.60)"><rect x="0.8" y="0.4" width="2.8" height="3.6" fill="#333"/><rect x="1.4" y="1" width="1.2" height="1" fill="#888"/></g>
<g transform="translate(192.80,33.60)"><path d="M1.4 2 L2.2 2.8 L3 2" stroke="#c8c8c8" stroke-width="0.6" fill="none"/></g>
<g transform="translate(197.10,33.60)"><rect x="0.8" y="0.8" width="2.8" height="2.8" fill="none" stroke="#cfcfcf" stroke-width="0.6"/><path d="M0.8 3.6 L3.6 0.8" stroke="#cfcfcf" stroke-width="0.5"/></g>
<g transform="translate(203.20,33.60)"><rect x="0.5" y="0.5" width="3.4" height="3.4" fill="#333"/><rect x="2" y="1" width="1.9" height="2.9" fill="#18a890"/></g>
<g transform="translate(207.80,33.60)"><path d="M1.4 2 L2.2 2.8 L3 2" stroke="#c8c8c8" stroke-width="0.6" fill="none"/></g>
<g transform="translate(213.80,33.60)"><circle cx="2.8" cy="1.6" r="1.3" fill="#9ab0e0" stroke="#3a50c0" stroke-width="0.6"/><path d="M1.9 2.5 L0.4 4" stroke="#333" stroke-width="0.9"/></g>
<g transform="translate(220.10,33.60)"><circle cx="2.2" cy="1.8" r="1.6" fill="#c8c030"/><rect x="1.5" y="3" width="1.4" height="1.2" fill="#555"/></g>
<g transform="translate(306.60,33.60)"><circle cx="1.8" cy="1.8" r="1.4" fill="none" stroke="#c03040" stroke-width="0.8"/><rect x="2.6" y="2.6" width="1.5" height="1.5" fill="#4a4aa8"/></g>
<g transform="translate(312.80,33.60)"><circle cx="1.8" cy="1.8" r="1.4" fill="none" stroke="#60a060" stroke-width="0.8"/><rect x="2.6" y="2.6" width="1.5" height="1.5" fill="#4a4aa8"/></g>
<g transform="translate(318.60,33.60)"><circle cx="1.8" cy="1.8" r="1.4" fill="none" stroke="#9090a0" stroke-width="0.8"/><rect x="2.6" y="2.6" width="1.5" height="1.5" fill="#4a4aa8"/></g>
<g transform="translate(325.30,33.60)"><circle cx="1.8" cy="1.8" r="1.4" fill="none" stroke="#bbbbbb" stroke-width="0.8"/><rect x="2.6" y="2.6" width="1.5" height="1.5" fill="#4a4aa8"/></g>
<g transform="translate(330.90,33.60)"><rect x="0.3" y="0.3" width="3.8" height="3.8" fill="#2ab0a8" stroke="#2a4a4a" stroke-width="0.6"/></g>
<g transform="translate(14.70,41.30)" opacity="1.0"><rect x="1.2" y="1.2" width="2" height="2" fill="#cfcfcf"/></g>
<g transform="translate(20.50,41.30)" opacity="1.0"><rect x="0.6" y="1.8" width="3.2" height="0.8" fill="#cfcfcf"/></g>
<g transform="translate(26.40,41.30)" opacity="1.0"><circle cx="2.2" cy="2.2" r="1.3" fill="none" stroke="#cfcfcf" stroke-width="0.8"/></g>
<g transform="translate(32.60,41.30)" opacity="1.0"><path d="M2.8 0.6 A1.8 1.8 0 1 0 2.8 3.8 A1.2 1.6 0 1 1 2.8 0.6z" fill="#cfcfcf"/></g>
<g transform="translate(38.50,41.30)" opacity="1.0"><path d="M0.6 0.8 h1.6 l1.8 1.4 l-1.8 1.4 h-1.6z" fill="none" stroke="#cfcfcf" stroke-width="0.6"/></g>
<g transform="translate(44.40,41.30)" opacity="1.0"><rect x="0.6" y="0.2" width="3" height="2" fill="#cfcfcf"/><rect x="0.9" y="2.2" width="2.6" height="2" fill="none" stroke="#cfcfcf" stroke-width="0.5"/></g>
<g transform="translate(50.60,41.30)" opacity="1.0"><rect x="0.3" y="0.2" width="3.8" height="1.8" fill="#cfcfcf"/><rect x="0.8" y="2" width="2.8" height="2.2" fill="none" stroke="#cfcfcf" stroke-width="0.5"/></g>
<g transform="translate(56.50,41.30)" opacity="1.0"><rect x="0.5" y="1.6" width="3.4" height="2.6" fill="#cfcfcf"/><rect x="1.6" y="0.3" width="1.2" height="1.4" fill="#cfcfcf"/></g>
<g transform="translate(62.30,41.30)" opacity="1.0"><rect x="0.4" y="0.6" width="2.6" height="2" fill="#cfcfcf"/><rect x="1.8" y="2.2" width="1.6" height="2" fill="#cfcfcf"/></g>
<g transform="translate(68.60,41.30)" opacity="1.0"><rect x="0.6" y="0.5" width="3" height="3.4" fill="#cfcfcf" stroke="#cfcfcf" stroke-width="0.5"/></g>
<g transform="translate(74.80,41.30)" opacity="1.0"><path d="M0.4 1 h1 v2.6 M1.8 1 h2 v2.6" stroke="#cfcfcf" stroke-width="0.6" fill="none"/></g>
<g transform="translate(80.60,41.30)" opacity="1.0"><rect x="0.5" y="1.6" width="3.4" height="1.2" fill="#cfcfcf"/></g>
<g transform="translate(86.80,41.30)" opacity="1.0"><path d="M0.6 1 h3.4 l-0.6 2.6 h-3.4z" fill="#5a5a5a"/></g>
<g transform="translate(93.10,41.30)" opacity="1.0"><path d="M2.2 0.8 L4 2.2 L2.2 3.6 L0.4 2.2z" fill="#cfcfcf"/></g>
<g transform="translate(98.60,41.30)" opacity="1.0"><path d="M0.6 0.4 L2.2 2.4 L3.8 0.4 M2.2 2.4 V4.2" stroke="#6a6a6a" stroke-width="0.9"/></g>
<g transform="translate(106.50,41.30)" opacity="1.0"><rect x="1.3" y="0.8" width="1.8" height="3.6" fill="#999"/><rect x="1.7" y="0.1" width="1" height="0.8" fill="#999"/></g>
<g transform="translate(114.50,41.30)" opacity="1.0"><circle cx="1.2" cy="1.4" r="0.9" fill="#cfcfcf"/><circle cx="3.2" cy="3" r="0.9" fill="#cfcfcf"/></g>
<g transform="translate(120.40,41.30)" opacity="1.0"><path d="M2.8 0.4 V3.2 M2.8 0.4 h0.8" stroke="#cfcfcf" stroke-width="0.6"/><circle cx="2.2" cy="3.4" r="0.8" fill="#cfcfcf"/></g>
<polygon points="137.5,41.6 137.5,45.4 140.5,43.5" fill="#666"/>
<g transform="translate(194.20,41.30)" opacity="1.0"><circle cx="2.4" cy="1.8" r="1.4" fill="#e4f0dc" stroke="#a8cc98" stroke-width="0.6"/><path d="M1.4 2.8 L0.3 4" stroke="#98bc88" stroke-width="0.8"/></g>
<g transform="translate(200.20,41.30)" opacity="1.0"><circle cx="2.4" cy="1.8" r="1.4" fill="#e4f0dc" stroke="#a8cc98" stroke-width="0.6"/><path d="M1.4 2.8 L0.3 4" stroke="#98bc88" stroke-width="0.8"/></g>
<g transform="translate(206.10,41.30)" opacity="1.0"><circle cx="2.4" cy="1.8" r="1.4" fill="#e4f0dc" stroke="#a8cc98" stroke-width="0.6"/><path d="M1.4 2.8 L0.3 4" stroke="#98bc88" stroke-width="0.8"/></g>
<g transform="translate(211.80,41.30)" opacity="1.0"><circle cx="2.4" cy="1.8" r="1.4" fill="#e4f0dc" stroke="#a8cc98" stroke-width="0.6"/><path d="M1.4 2.8 L0.3 4" stroke="#98bc88" stroke-width="0.8"/></g>
<g transform="translate(217.80,41.30)" opacity="1.0"><circle cx="2.4" cy="1.8" r="1.4" fill="#e4f0dc" stroke="#a8cc98" stroke-width="0.6"/><path d="M1.4 2.8 L0.3 4" stroke="#98bc88" stroke-width="0.8"/></g>
<g transform="translate(224.40,41.30)" opacity="1.0"><circle cx="2.4" cy="1.8" r="1.4" fill="#e4f0dc" stroke="#a8cc98" stroke-width="0.6"/><path d="M1.4 2.8 L0.3 4" stroke="#98bc88" stroke-width="0.8"/></g>
<g transform="translate(230.40,41.30)" opacity="1.0"><circle cx="2.4" cy="1.8" r="1.4" fill="#e4f0dc" stroke="#a8cc98" stroke-width="0.6"/><path d="M1.4 2.8 L0.3 4" stroke="#98bc88" stroke-width="0.8"/></g>
<g transform="translate(236.20,41.30)" opacity="1.0"><rect x="0.5" y="0.5" width="3.4" height="3.4" rx="0.6" fill="#444"/><rect x="1.4" y="1.4" width="1.6" height="1.6" fill="#ddd"/></g>
<rect x="418.2" y="48" width="0.8" height="165" fill="#cfcfcf"/>
<rect x="12.5" y="212.6" width="406.5" height="0.8" fill="#cfcfcf"/>
<path d="M414 215.4 h3.8 v1.8 l-1.9 2 l-1.9 -2z" fill="#5058d0"/>
<path d="M13.2 222.6 l2 2 M15.2 222.6 l-2 2" stroke="#333" stroke-width="0.7"/>
<rect x="411.9" y="255.8" width="12.1" height="3.0" fill="#33dd33"/><rect x="414.20" y="255.8" width="0.45" height="3.0" fill="#8ae88a"/><rect x="416.62" y="255.8" width="0.45" height="3.0" fill="#8ae88a"/><rect x="419.04" y="255.8" width="0.45" height="3.0" fill="#8ae88a"/><rect x="421.46" y="255.8" width="0.45" height="3.0" fill="#8ae88a"/>
<rect x="407.1" y="284.9" width="2.6" height="2.4" fill="none" stroke="#3a3a3a" stroke-width="0.5"/><rect x="407.1" y="284.7" width="2.6" height="0.7" fill="#3a3a3a"/>
<path d="M417.1 284.9 l2.3 2.3 M419.4 284.9 l-2.3 2.3" stroke="#fff" stroke-width="0.75"/>
<rect x="417" y="292.4" width="2" height="2" fill="none" stroke="#555" stroke-width="0.45"/>
<path d="M421.1 292.5 l1.9 1.9 M423.0 292.5 l-1.9 1.9" stroke="#444" stroke-width="0.6"/>
<g transform="translate(14.80,298.60)"><rect x="0.6" y="0.3" width="3" height="3.8" fill="#fff" stroke="#555" stroke-width="0.5"/></g>
<g transform="translate(20.40,298.60)"><path d="M0.2 1.2 h1.6 l0.5 0.5 h2 v2.6 h-4.1z" fill="#a9b040"/><path d="M1.6 3.6 L4.2 0.6" stroke="#444" stroke-width="0.8"/></g>
<g transform="translate(26.60,298.60)"><path d="M0.2 1.4 h1.6 l0.5 0.5 h2 v2.3 h-4.1z" fill="#2d7fe0"/><rect x="1.6" y="0.2" width="2" height="1.2" fill="#6aa8f0"/></g>
<g transform="translate(32.70,298.60)"><rect x="0.4" y="0.4" width="3.6" height="3.6" fill="#efe98a" stroke="#333" stroke-width="0.6"/></g>
<g transform="translate(40.30,298.60)"><rect x="0.2" y="1.4" width="4.2" height="2.2" rx="0.6" fill="#6e6e6e"/><rect x="1" y="0.3" width="2.6" height="1.4" fill="#aaa"/><rect x="1" y="3.2" width="2.6" height="1" fill="#999"/></g>
<g transform="translate(46.60,298.60)"><rect x="0.6" y="0.2" width="2.8" height="3.9" fill="#fff" stroke="#777" stroke-width="0.45"/><circle cx="2.9" cy="2.6" r="1" fill="none" stroke="#555" stroke-width="0.6"/></g>
<g transform="translate(53.80,298.60)"><path d="M1 0.5 L3 3.8 M3 0.5 L1 3.8" stroke="#d6d6d6" stroke-width="0.6"/></g>
<g transform="translate(60.30,298.60)"><rect x="0.5" y="0.5" width="2.4" height="2.8" fill="none" stroke="#d8d8d8" stroke-width="0.5"/><rect x="1.6" y="1.3" width="2.4" height="2.8" fill="none" stroke="#d8d8d8" stroke-width="0.5"/></g>
<g transform="translate(66.40,298.60)"><circle cx="2.2" cy="2.2" r="2.1" fill="#4e5a30"/><path d="M2.2 2.2 L4.3 2.2 A2.1 2.1 0 0 1 2.2 4.3z" fill="#6a6ad8"/></g>
<g transform="translate(73.40,298.60)"><path d="M3.8 3.4 A1.6 1.6 0 0 0 1 1.6" stroke="#2a4ad8" stroke-width="1.1" fill="none"/><path d="M0 0.6 L1.8 2.6 L0.2 3z" fill="#2a4ad8"/></g>
<g transform="translate(80.00,298.60)"><path d="M0.6 3.4 A1.6 1.6 0 0 1 3.4 1.6" stroke="#d4d4d4" stroke-width="0.9" fill="none"/></g>
<g transform="translate(89.00,298.60)"><rect x="0" y="0" width="4.4" height="4.4" fill="#4b4fbc"/><rect x="1.2" y="1.2" width="2" height="2" fill="#fff" opacity="0.8"/></g>
<g transform="translate(95.30,298.60)"><rect x="0" y="0" width="4.4" height="4.4" fill="#4b4fbc"/><rect x="1.2" y="1.2" width="2" height="2" fill="#555" opacity="0.8"/></g>
<g transform="translate(101.40,298.60)"><rect x="0" y="0" width="4.4" height="4.4" fill="#4b4fbc"/><rect x="1.2" y="1.2" width="2" height="2" fill="#e05050" opacity="0.8"/></g>
<g transform="translate(108.00,298.60)"><rect x="0" y="0" width="4.4" height="4.4" fill="#4b4fbc"/><rect x="1.2" y="1.2" width="2" height="2" fill="#fff" opacity="0.8"/></g>
<g transform="translate(114.40,298.60)"><rect x="0.1" y="0.4" width="4.2" height="3.6" fill="#3a3a3a"/><rect x="0.6" y="1.6" width="3.2" height="0.9" fill="#ddd"/></g>
<g transform="translate(120.40,298.60)"><path d="M0.5 0.8 h3.4 M0.5 2.2 h3.4 M0.5 3.6 h3.4" stroke="#d0d0d0" stroke-width="0.6"/></g>
<g transform="translate(127.80,298.60)"><path d="M1 0.5 v3.5 M1 0.5 h2" stroke="#d4d4d4" stroke-width="0.7"/></g>
<g transform="translate(133.80,298.60)"><circle cx="2.2" cy="2.2" r="1.6" fill="none" stroke="#d6d6d6" stroke-width="0.6"/></g>
<g transform="translate(181.20,298.60)"><circle cx="2.2" cy="2.3" r="1.9" fill="#f2c8c8"/><path d="M0.4 2.4 A1.9 1.9 0 0 0 4 2.4z" fill="#e03a3a"/><rect x="1.6" y="0.6" width="1.2" height="1.2" fill="#3a9a6a"/></g>
<g transform="translate(188.00,298.60)"><rect x="0.8" y="0.4" width="2.8" height="3.6" fill="#333"/><rect x="1.4" y="1" width="1.2" height="1" fill="#888"/></g>
<g transform="translate(192.80,298.60)"><path d="M1.4 2 L2.2 2.8 L3 2" stroke="#c8c8c8" stroke-width="0.6" fill="none"/></g>
<g transform="translate(197.10,298.60)"><rect x="0.8" y="0.8" width="2.8" height="2.8" fill="none" stroke="#cfcfcf" stroke-width="0.6"/><path d="M0.8 3.6 L3.6 0.8" stroke="#cfcfcf" stroke-width="0.5"/></g>
<g transform="translate(203.20,298.60)"><rect x="0.5" y="0.5" width="3.4" height="3.4" fill="#333"/><rect x="2" y="1" width="1.9" height="2.9" fill="#18a890"/></g>
<g transform="translate(207.80,298.60)"><path d="M1.4 2 L2.2 2.8 L3 2" stroke="#c8c8c8" stroke-width="0.6" fill="none"/></g>
<g transform="translate(213.80,298.60)"><circle cx="2.8" cy="1.6" r="1.3" fill="#9ab0e0" stroke="#3a50c0" stroke-width="0.6"/><path d="M1.9 2.5 L0.4 4" stroke="#333" stroke-width="0.9"/></g>
<g transform="translate(220.10,298.60)"><circle cx="2.2" cy="1.8" r="1.6" fill="#c8c030"/><rect x="1.5" y="3" width="1.4" height="1.2" fill="#555"/></g>
<g transform="translate(306.60,298.60)"><circle cx="1.8" cy="1.8" r="1.4" fill="none" stroke="#c03040" stroke-width="0.8"/><rect x="2.6" y="2.6" width="1.5" height="1.5" fill="#4a4aa8"/></g>
<g transform="translate(312.80,298.60)"><circle cx="1.8" cy="1.8" r="1.4" fill="none" stroke="#60a060" stroke-width="0.8"/><rect x="2.6" y="2.6" width="1.5" height="1.5" fill="#4a4aa8"/></g>
<g transform="translate(318.60,298.60)"><circle cx="1.8" cy="1.8" r="1.4" fill="none" stroke="#9090a0" stroke-width="0.8"/><rect x="2.6" y="2.6" width="1.5" height="1.5" fill="#4a4aa8"/></g>
<g transform="translate(325.30,298.60)"><circle cx="1.8" cy="1.8" r="1.4" fill="none" stroke="#bbbbbb" stroke-width="0.8"/><rect x="2.6" y="2.6" width="1.5" height="1.5" fill="#4a4aa8"/></g>
<g transform="translate(330.90,298.60)"><rect x="0.3" y="0.3" width="3.8" height="3.8" fill="#2ab0a8" stroke="#2a4a4a" stroke-width="0.6"/></g>
<g transform="translate(14.70,306.30)" opacity="1.0"><rect x="1.2" y="1.2" width="2" height="2" fill="#555"/></g>
<g transform="translate(20.50,306.30)" opacity="1.0"><rect x="0.6" y="1.8" width="3.2" height="0.8" fill="#999"/></g>
<g transform="translate(26.40,306.30)" opacity="1.0"><circle cx="2.2" cy="2.2" r="1.3" fill="none" stroke="#666" stroke-width="0.8"/></g>
<g transform="translate(32.60,306.30)" opacity="1.0"><path d="M2.8 0.6 A1.8 1.8 0 1 0 2.8 3.8 A1.2 1.6 0 1 1 2.8 0.6z" fill="#444"/></g>
<g transform="translate(38.50,306.30)" opacity="1.0"><path d="M0.6 0.8 h1.6 l1.8 1.4 l-1.8 1.4 h-1.6z" fill="none" stroke="#888" stroke-width="0.6"/></g>
<g transform="translate(44.40,306.30)" opacity="1.0"><rect x="0.6" y="0.2" width="3" height="2" fill="#5a6ee0"/><rect x="0.9" y="2.2" width="2.6" height="2" fill="none" stroke="#777" stroke-width="0.5"/></g>
<g transform="translate(50.60,306.30)" opacity="1.0"><rect x="0.3" y="0.2" width="3.8" height="1.8" fill="#6a7ae8"/><rect x="0.8" y="2" width="2.8" height="2.2" fill="none" stroke="#777" stroke-width="0.5"/></g>
<g transform="translate(56.50,306.30)" opacity="1.0"><rect x="0.5" y="1.6" width="3.4" height="2.6" fill="#e02a2a"/><rect x="1.6" y="0.3" width="1.2" height="1.4" fill="#333"/></g>
<g transform="translate(62.30,306.30)" opacity="1.0"><rect x="0.4" y="0.6" width="2.6" height="2" fill="#e06a7a"/><rect x="1.8" y="2.2" width="1.6" height="2" fill="#222"/></g>
<g transform="translate(68.60,306.30)" opacity="1.0"><rect x="0.6" y="0.5" width="3" height="3.4" fill="#f0b0b0" stroke="#c84040" stroke-width="0.5"/></g>
<g transform="translate(74.80,306.30)" opacity="1.0"><path d="M0.4 1 h1 v2.6 M1.8 1 h2 v2.6" stroke="#888" stroke-width="0.6" fill="none"/></g>
<g transform="translate(80.60,306.30)" opacity="1.0"><rect x="0.5" y="1.6" width="3.4" height="1.2" fill="#aaa"/></g>
<g transform="translate(86.80,306.30)" opacity="1.0"><path d="M0.6 1 h3.4 l-0.6 2.6 h-3.4z" fill="#111"/></g>
<g transform="translate(93.10,306.30)" opacity="1.0"><path d="M2.2 0.8 L4 2.2 L2.2 3.6 L0.4 2.2z" fill="#888"/></g>
<g transform="translate(98.60,306.30)" opacity="1.0"><path d="M0.6 0.4 L2.2 2.4 L3.8 0.4 M2.2 2.4 V4.2" stroke="#3a70c8" stroke-width="0.9"/></g>
<g transform="translate(106.50,306.30)" opacity="1.0"><rect x="1.3" y="0.8" width="1.8" height="3.6" fill="#333"/><rect x="1.7" y="0.1" width="1" height="0.8" fill="#333"/></g>
<g transform="translate(114.50,306.30)" opacity="1.0"><circle cx="1.2" cy="1.4" r="0.9" fill="#5050a0"/><circle cx="3.2" cy="3" r="0.9" fill="#6a5ab0"/></g>
<g transform="translate(120.40,306.30)" opacity="1.0"><path d="M2.8 0.4 V3.2 M2.8 0.4 h0.8" stroke="#555" stroke-width="0.6"/><circle cx="2.2" cy="3.4" r="0.8" fill="#555"/></g>
<polygon points="137.3,306.4 137.3,310.6 140.8,308.5" fill="#22aa33"/>
<g transform="translate(194.20,306.30)" opacity="1.0"><circle cx="2.4" cy="1.8" r="1.4" fill="#e4f0dc" stroke="#a8cc98" stroke-width="0.6"/><path d="M1.4 2.8 L0.3 4" stroke="#98bc88" stroke-width="0.8"/></g>
<g transform="translate(200.20,306.30)" opacity="1.0"><circle cx="2.4" cy="1.8" r="1.4" fill="#e4f0dc" stroke="#a8cc98" stroke-width="0.6"/><path d="M1.4 2.8 L0.3 4" stroke="#98bc88" stroke-width="0.8"/></g>
<g transform="translate(206.10,306.30)" opacity="1.0"><circle cx="2.4" cy="1.8" r="1.4" fill="#e4f0dc" stroke="#a8cc98" stroke-width="0.6"/><path d="M1.4 2.8 L0.3 4" stroke="#98bc88" stroke-width="0.8"/></g>
<g transform="translate(211.80,306.30)" opacity="1.0"><circle cx="2.4" cy="1.8" r="1.4" fill="#e4f0dc" stroke="#a8cc98" stroke-width="0.6"/><path d="M1.4 2.8 L0.3 4" stroke="#98bc88" stroke-width="0.8"/></g>
<g transform="translate(217.80,306.30)" opacity="1.0"><circle cx="2.4" cy="1.8" r="1.4" fill="#e4f0dc" stroke="#a8cc98" stroke-width="0.6"/><path d="M1.4 2.8 L0.3 4" stroke="#98bc88" stroke-width="0.8"/></g>
<g transform="translate(224.40,306.30)" opacity="1.0"><circle cx="2.4" cy="1.8" r="1.4" fill="#e4f0dc" stroke="#a8cc98" stroke-width="0.6"/><path d="M1.4 2.8 L0.3 4" stroke="#98bc88" stroke-width="0.8"/></g>
<g transform="translate(230.40,306.30)" opacity="1.0"><circle cx="2.4" cy="1.8" r="1.4" fill="#e4f0dc" stroke="#a8cc98" stroke-width="0.6"/><path d="M1.4 2.8 L0.3 4" stroke="#98bc88" stroke-width="0.8"/></g>
<g transform="translate(236.20,306.30)" opacity="1.0"><rect x="0.5" y="0.5" width="3.4" height="3.4" rx="0.6" fill="#444"/><rect x="1.4" y="1.4" width="1.6" height="1.6" fill="#ddd"/></g>
<rect x="418.2" y="313" width="0.8" height="165" fill="#cfcfcf"/>
<g transform="translate(421.5,318.4)"><circle r="2.2" fill="#e06060"/><path d="M0 0 L-2.2 0 A2.2 2.2 0 0 1 0 -2.2z" fill="#2a9a5a"/><path d="M0 0 L0 2.2 A2.2 2.2 0 0 1 -2.2 0z" fill="#444"/></g>
<rect x="12.5" y="477.6" width="406.5" height="0.8" fill="#cfcfcf"/>
<path d="M414 480.4 h3.8 v1.8 l-1.9 2 l-1.9 -2z" fill="#5058d0"/>
<path d="M13.2 487.6 l2 2 M15.2 487.6 l-2 2" stroke="#333" stroke-width="0.7"/>
<rect x="841.1" y="198.9" width="2.6" height="2.4" fill="none" stroke="#666" stroke-width="0.5"/><rect x="841.1" y="198.7" width="2.6" height="0.7" fill="#666"/>
<path d="M851.1 198.9 l2.3 2.3 M853.4 198.9 l-2.3 2.3" stroke="#fff" stroke-width="0.75"/>
<rect x="851" y="206.4" width="2" height="2" fill="none" stroke="#555" stroke-width="0.45"/>
<path d="M855.1 206.5 l1.9 1.9 M857.0 206.5 l-1.9 1.9" stroke="#444" stroke-width="0.6"/>
<g transform="translate(448.80,212.60)"><rect x="0.6" y="0.3" width="3" height="3.8" fill="#fff" stroke="#555" stroke-width="0.5"/></g>
<g transform="translate(454.40,212.60)"><path d="M0.2 1.2 h1.6 l0.5 0.5 h2 v2.6 h-4.1z" fill="#a9b040"/><path d="M1.6 3.6 L4.2 0.6" stroke="#444" stroke-width="0.8"/></g>
<g transform="translate(460.60,212.60)"><path d="M0.2 1.4 h1.6 l0.5 0.5 h2 v2.3 h-4.1z" fill="#2d7fe0"/><rect x="1.6" y="0.2" width="2" height="1.2" fill="#6aa8f0"/></g>
<g transform="translate(466.70,212.60)"><rect x="0.4" y="0.4" width="3.6" height="3.6" fill="#efe98a" stroke="#333" stroke-width="0.6"/></g>
<g transform="translate(474.30,212.60)"><rect x="0.2" y="1.4" width="4.2" height="2.2" rx="0.6" fill="#6e6e6e"/><rect x="1" y="0.3" width="2.6" height="1.4" fill="#aaa"/><rect x="1" y="3.2" width="2.6" height="1" fill="#999"/></g>
<g transform="translate(480.60,212.60)"><rect x="0.6" y="0.2" width="2.8" height="3.9" fill="#fff" stroke="#777" stroke-width="0.45"/><circle cx="2.9" cy="2.6" r="1" fill="none" stroke="#555" stroke-width="0.6"/></g>
<g transform="translate(487.80,212.60)"><path d="M1 0.5 L3 3.8 M3 0.5 L1 3.8" stroke="#d6d6d6" stroke-width="0.6"/></g>
<g transform="translate(494.30,212.60)"><rect x="0.5" y="0.5" width="2.4" height="2.8" fill="none" stroke="#d8d8d8" stroke-width="0.5"/><rect x="1.6" y="1.3" width="2.4" height="2.8" fill="none" stroke="#d8d8d8" stroke-width="0.5"/></g>
<g transform="translate(500.40,212.60)"><circle cx="2.2" cy="2.2" r="2.1" fill="#4e5a30"/><path d="M2.2 2.2 L4.3 2.2 A2.1 2.1 0 0 1 2.2 4.3z" fill="#6a6ad8"/></g>
<g transform="translate(507.40,212.60)"><path d="M3.8 3.4 A1.6 1.6 0 0 0 1 1.6" stroke="#2a4ad8" stroke-width="1.1" fill="none"/><path d="M0 0.6 L1.8 2.6 L0.2 3z" fill="#2a4ad8"/></g>
<g transform="translate(514.00,212.60)"><path d="M0.6 3.4 A1.6 1.6 0 0 1 3.4 1.6" stroke="#d4d4d4" stroke-width="0.9" fill="none"/></g>
<g transform="translate(523.00,212.60)"><rect x="0" y="0" width="4.4" height="4.4" fill="#4b4fbc"/><rect x="1.2" y="1.2" width="2" height="2" fill="#fff" opacity="0.8"/></g>
<g transform="translate(529.30,212.60)"><rect x="0" y="0" width="4.4" height="4.4" fill="#4b4fbc"/><rect x="1.2" y="1.2" width="2" height="2" fill="#555" opacity="0.8"/></g>
<g transform="translate(535.40,212.60)"><rect x="0" y="0" width="4.4" height="4.4" fill="#4b4fbc"/><rect x="1.2" y="1.2" width="2" height="2" fill="#e05050" opacity="0.8"/></g>
<g transform="translate(542.00,212.60)"><rect x="0" y="0" width="4.4" height="4.4" fill="#4b4fbc"/><rect x="1.2" y="1.2" width="2" height="2" fill="#fff" opacity="0.8"/></g>
<g transform="translate(548.40,212.60)"><rect x="0.1" y="0.4" width="4.2" height="3.6" fill="#3a3a3a"/><rect x="0.6" y="1.6" width="3.2" height="0.9" fill="#ddd"/></g>
<g transform="translate(554.40,212.60)"><path d="M0.5 0.8 h3.4 M0.5 2.2 h3.4 M0.5 3.6 h3.4" stroke="#d0d0d0" stroke-width="0.6"/></g>
<g transform="translate(561.80,212.60)"><path d="M1 0.5 v3.5 M1 0.5 h2" stroke="#d4d4d4" stroke-width="0.7"/></g>
<g transform="translate(567.80,212.60)"><circle cx="2.2" cy="2.2" r="1.6" fill="none" stroke="#d6d6d6" stroke-width="0.6"/></g>
<g transform="translate(615.20,212.60)"><circle cx="2.2" cy="2.3" r="1.9" fill="#f2c8c8"/><path d="M0.4 2.4 A1.9 1.9 0 0 0 4 2.4z" fill="#e03a3a"/><rect x="1.6" y="0.6" width="1.2" height="1.2" fill="#3a9a6a"/></g>
<g transform="translate(622.00,212.60)"><rect x="0.8" y="0.4" width="2.8" height="3.6" fill="#333"/><rect x="1.4" y="1" width="1.2" height="1" fill="#888"/></g>
<g transform="translate(626.80,212.60)"><path d="M1.4 2 L2.2 2.8 L3 2" stroke="#c8c8c8" stroke-width="0.6" fill="none"/></g>
<g transform="translate(631.10,212.60)"><rect x="0.8" y="0.8" width="2.8" height="2.8" fill="none" stroke="#cfcfcf" stroke-width="0.6"/><path d="M0.8 3.6 L3.6 0.8" stroke="#cfcfcf" stroke-width="0.5"/></g>
<g transform="translate(637.20,212.60)"><rect x="0.5" y="0.5" width="3.4" height="3.4" fill="#333"/><rect x="2" y="1" width="1.9" height="2.9" fill="#18a890"/></g>
<g transform="translate(641.80,212.60)"><path d="M1.4 2 L2.2 2.8 L3 2" stroke="#c8c8c8" stroke-width="0.6" fill="none"/></g>
<g transform="translate(647.80,212.60)"><circle cx="2.8" cy="1.6" r="1.3" fill="#9ab0e0" stroke="#3a50c0" stroke-width="0.6"/><path d="M1.9 2.5 L0.4 4" stroke="#333" stroke-width="0.9"/></g>
<g transform="translate(654.10,212.60)"><circle cx="2.2" cy="1.8" r="1.6" fill="#c8c030"/><rect x="1.5" y="3" width="1.4" height="1.2" fill="#555"/></g>
<g transform="translate(740.60,212.60)"><circle cx="1.8" cy="1.8" r="1.4" fill="none" stroke="#c03040" stroke-width="0.8"/><rect x="2.6" y="2.6" width="1.5" height="1.5" fill="#4a4aa8"/></g>
<g transform="translate(746.80,212.60)"><circle cx="1.8" cy="1.8" r="1.4" fill="none" stroke="#60a060" stroke-width="0.8"/><rect x="2.6" y="2.6" width="1.5" height="1.5" fill="#4a4aa8"/></g>
<g transform="translate(752.60,212.60)"><circle cx="1.8" cy="1.8" r="1.4" fill="none" stroke="#9090a0" stroke-width="0.8"/><rect x="2.6" y="2.6" width="1.5" height="1.5" fill="#4a4aa8"/></g>
<g transform="translate(759.30,212.60)"><circle cx="1.8" cy="1.8" r="1.4" fill="none" stroke="#bbbbbb" stroke-width="0.8"/><rect x="2.6" y="2.6" width="1.5" height="1.5" fill="#4a4aa8"/></g>
<g transform="translate(764.90,212.60)"><rect x="0.3" y="0.3" width="3.8" height="3.8" fill="#2ab0a8" stroke="#2a4a4a" stroke-width="0.6"/></g>
<g transform="translate(448.70,220.30)" opacity="1.0"><rect x="1.2" y="1.2" width="2" height="2" fill="#555"/></g>
<g transform="translate(454.50,220.30)" opacity="1.0"><rect x="0.6" y="1.8" width="3.2" height="0.8" fill="#999"/></g>
<g transform="translate(460.40,220.30)" opacity="1.0"><circle cx="2.2" cy="2.2" r="1.3" fill="none" stroke="#666" stroke-width="0.8"/></g>
<g transform="translate(466.60,220.30)" opacity="1.0"><path d="M2.8 0.6 A1.8 1.8 0 1 0 2.8 3.8 A1.2 1.6 0 1 1 2.8 0.6z" fill="#444"/></g>
<g transform="translate(472.50,220.30)" opacity="1.0"><path d="M0.6 0.8 h1.6 l1.8 1.4 l-1.8 1.4 h-1.6z" fill="none" stroke="#888" stroke-width="0.6"/></g>
<g transform="translate(478.40,220.30)" opacity="1.0"><rect x="0.6" y="0.2" width="3" height="2" fill="#5a6ee0"/><rect x="0.9" y="2.2" width="2.6" height="2" fill="none" stroke="#777" stroke-width="0.5"/></g>
<g transform="translate(484.60,220.30)" opacity="1.0"><rect x="0.3" y="0.2" width="3.8" height="1.8" fill="#6a7ae8"/><rect x="0.8" y="2" width="2.8" height="2.2" fill="none" stroke="#777" stroke-width="0.5"/></g>
<g transform="translate(490.50,220.30)" opacity="1.0"><rect x="0.5" y="1.6" width="3.4" height="2.6" fill="#e02a2a"/><rect x="1.6" y="0.3" width="1.2" height="1.4" fill="#333"/></g>
<g transform="translate(496.30,220.30)" opacity="1.0"><rect x="0.4" y="0.6" width="2.6" height="2" fill="#e06a7a"/><rect x="1.8" y="2.2" width="1.6" height="2" fill="#222"/></g>
<g transform="translate(502.60,220.30)" opacity="1.0"><rect x="0.6" y="0.5" width="3" height="3.4" fill="#f0b0b0" stroke="#c84040" stroke-width="0.5"/></g>
<g transform="translate(508.80,220.30)" opacity="1.0"><path d="M0.4 1 h1 v2.6 M1.8 1 h2 v2.6" stroke="#888" stroke-width="0.6" fill="none"/></g>
<g transform="translate(514.60,220.30)" opacity="1.0"><rect x="0.5" y="1.6" width="3.4" height="1.2" fill="#aaa"/></g>
<g transform="translate(520.80,220.30)" opacity="1.0"><path d="M0.6 1 h3.4 l-0.6 2.6 h-3.4z" fill="#111"/></g>
<g transform="translate(527.10,220.30)" opacity="1.0"><path d="M2.2 0.8 L4 2.2 L2.2 3.6 L0.4 2.2z" fill="#888"/></g>
<g transform="translate(532.60,220.30)" opacity="1.0"><path d="M0.6 0.4 L2.2 2.4 L3.8 0.4 M2.2 2.4 V4.2" stroke="#3a70c8" stroke-width="0.9"/></g>
<g transform="translate(540.50,220.30)" opacity="1.0"><rect x="1.3" y="0.8" width="1.8" height="3.6" fill="#333"/><rect x="1.7" y="0.1" width="1" height="0.8" fill="#333"/></g>
<g transform="translate(548.50,220.30)" opacity="1.0"><circle cx="1.2" cy="1.4" r="0.9" fill="#5050a0"/><circle cx="3.2" cy="3" r="0.9" fill="#6a5ab0"/></g>
<g transform="translate(554.40,220.30)" opacity="1.0"><path d="M2.8 0.4 V3.2 M2.8 0.4 h0.8" stroke="#555" stroke-width="0.6"/><circle cx="2.2" cy="3.4" r="0.8" fill="#555"/></g>
<polygon points="571.3,220.4 571.3,224.6 574.8,222.5" fill="#22aa33"/>
<g transform="translate(628.20,220.30)" opacity="1.0"><circle cx="2.4" cy="1.8" r="1.4" fill="#e4f0dc" stroke="#a8cc98" stroke-width="0.6"/><path d="M1.4 2.8 L0.3 4" stroke="#98bc88" stroke-width="0.8"/></g>
<g transform="translate(634.20,220.30)" opacity="1.0"><circle cx="2.4" cy="1.8" r="1.4" fill="#e4f0dc" stroke="#a8cc98" stroke-width="0.6"/><path d="M1.4 2.8 L0.3 4" stroke="#98bc88" stroke-width="0.8"/></g>
<g transform="translate(640.10,220.30)" opacity="1.0"><circle cx="2.4" cy="1.8" r="1.4" fill="#e4f0dc" stroke="#a8cc98" stroke-width="0.6"/><path d="M1.4 2.8 L0.3 4" stroke="#98bc88" stroke-width="0.8"/></g>
<g transform="translate(645.80,220.30)" opacity="1.0"><circle cx="2.4" cy="1.8" r="1.4" fill="#e4f0dc" stroke="#a8cc98" stroke-width="0.6"/><path d="M1.4 2.8 L0.3 4" stroke="#98bc88" stroke-width="0.8"/></g>
<g transform="translate(651.80,220.30)" opacity="1.0"><circle cx="2.4" cy="1.8" r="1.4" fill="#e4f0dc" stroke="#a8cc98" stroke-width="0.6"/><path d="M1.4 2.8 L0.3 4" stroke="#98bc88" stroke-width="0.8"/></g>
<g transform="translate(658.40,220.30)" opacity="1.0"><circle cx="2.4" cy="1.8" r="1.4" fill="#e4f0dc" stroke="#a8cc98" stroke-width="0.6"/><path d="M1.4 2.8 L0.3 4" stroke="#98bc88" stroke-width="0.8"/></g>
<g transform="translate(664.40,220.30)" opacity="1.0"><circle cx="2.4" cy="1.8" r="1.4" fill="#e4f0dc" stroke="#a8cc98" stroke-width="0.6"/><path d="M1.4 2.8 L0.3 4" stroke="#98bc88" stroke-width="0.8"/></g>
<g transform="translate(670.20,220.30)" opacity="1.0"><rect x="0.5" y="0.5" width="3.4" height="3.4" rx="0.6" fill="#444"/><rect x="1.4" y="1.4" width="1.6" height="1.6" fill="#ddd"/></g>
<rect x="852.2" y="227" width="0.8" height="165" fill="#cfcfcf"/>
<g transform="translate(855.5,232.4)"><circle r="2.2" fill="#e06060"/><path d="M0 0 L-2.2 0 A2.2 2.2 0 0 1 0 -2.2z" fill="#2a9a5a"/><path d="M0 0 L0 2.2 A2.2 2.2 0 0 1 -2.2 0z" fill="#444"/></g>
<rect x="446.5" y="391.6" width="406.5" height="0.8" fill="#cfcfcf"/>
<path d="M848 394.4 h3.8 v1.8 l-1.9 2 l-1.9 -2z" fill="#5058d0"/>
<path d="M447.2 401.6 l2 2 M449.2 401.6 l-2 2" stroke="#333" stroke-width="0.7"/>
<line x1="143.7" y1="101.5" x2="162.9" y2="101.5" stroke="#4a4a4a" stroke-width="0.9" />
<line x1="177.7" y1="101.5" x2="245.6" y2="101.5" stroke="#4a4a4a" stroke-width="0.9" />
<polyline points="162.90,101.50 163.83,99.10 165.68,103.90 167.53,99.10 169.38,103.90 171.22,99.10 173.07,103.90 174.92,99.10 176.77,103.90 177.70,101.50" stroke="#4a4a4a" stroke-width="0.9" fill="none" stroke-linejoin="miter"/>
<line x1="143.7" y1="101.5" x2="143.7" y2="133.2" stroke="#4a4a4a" stroke-width="0.9" />
<line x1="143.7" y1="143.2" x2="143.7" y2="175.1" stroke="#4a4a4a" stroke-width="0.9" />
<line x1="143.7" y1="175.1" x2="245.6" y2="175.1" stroke="#4a4a4a" stroke-width="0.9" />
<line x1="201.9" y1="101.5" x2="201.9" y2="133.5" stroke="#4a4a4a" stroke-width="0.9" />
<line x1="201.9" y1="148.4" x2="201.9" y2="175.1" stroke="#4a4a4a" stroke-width="0.9" />
<polyline points="201.90,133.50 199.50,134.43 204.30,136.29 199.50,138.16 204.30,140.02 199.50,141.88 204.30,143.74 199.50,145.61 204.30,147.47 201.90,148.40" stroke="#4a4a4a" stroke-width="0.9" fill="none" stroke-linejoin="miter"/>
<line x1="245.6" y1="101.5" x2="245.6" y2="133.5" stroke="#4a4a4a" stroke-width="0.9" />
<line x1="245.6" y1="148.4" x2="245.6" y2="175.1" stroke="#4a4a4a" stroke-width="0.9" />
<polyline points="245.60,133.50 243.20,134.43 248.00,136.29 243.20,138.16 248.00,140.02 243.20,141.88 248.00,143.74 243.20,145.61 248.00,147.47 245.60,148.40" stroke="#4a4a4a" stroke-width="0.9" fill="none" stroke-linejoin="miter"/>
<line x1="137.5" y1="133.2" x2="150" y2="133.2" stroke="#4a4a4a" stroke-width="0.9" />
<line x1="139.8" y1="136.4" x2="147.6" y2="136.4" stroke="#4a4a4a" stroke-width="0.9" />
<line x1="137.5" y1="139.6" x2="150" y2="139.6" stroke="#4a4a4a" stroke-width="0.9" />
<line x1="139.8" y1="143.0" x2="147.6" y2="143.0" stroke="#4a4a4a" stroke-width="0.9" />
<circle cx="201.9" cy="101.5" r="1.1" fill="#222"/>
<circle cx="201.9" cy="175.1" r="1.1" fill="#222"/>
<line x1="201.9" y1="175.1" x2="201.9" y2="180.6" stroke="#4a4a4a" stroke-width="0.9" />
<line x1="196.9" y1="180.8" x2="206.9" y2="180.8" stroke="#4a4a4a" stroke-width="0.9" />
<line x1="198.70000000000002" y1="183.4" x2="205.1" y2="183.4" stroke="#4a4a4a" stroke-width="0.9" />
<line x1="200.6" y1="186.0" x2="203.20000000000002" y2="186.0" stroke="#4a4a4a" stroke-width="0.9" />
<text x="165" y="94.20" font-size="7" font-weight="bold" fill="#1a1a1a" text-anchor="start">R1</text>
<text x="162.6" y="112.10" font-size="7" font-weight="bold" fill="#1a1a1a" text-anchor="start">1k&#937;</text>
<text x="151.2" y="131.20" font-size="7" font-weight="bold" fill="#1a1a1a" text-anchor="start">V1</text>
<text x="151.2" y="141.30" font-size="7" font-weight="bold" fill="#1a1a1a" text-anchor="start">10V</text>
<text x="205.4" y="133.20" font-size="7" font-weight="bold" fill="#1a1a1a" text-anchor="start">R2</text>
<text x="205.4" y="143.40" font-size="7" font-weight="bold" fill="#1a1a1a" text-anchor="start">10k&#937;</text>
<text x="249.4" y="133.20" font-size="7" font-weight="bold" fill="#1a1a1a" text-anchor="start">R3</text>
<text x="249.4" y="143.40" font-size="7" font-weight="bold" fill="#1a1a1a" text-anchor="start">10k&#937;</text>
<text x="207.7" y="98.80" font-size="7" font-weight="bold" fill="#1a1a1a" text-anchor="start">PR1</text>
<text x="246.7" y="98.80" font-size="7" font-weight="bold" fill="#1a1a1a" text-anchor="start">PR2</text>
<text x="217.9" y="120.20" font-size="7" font-weight="bold" fill="#1a1a1a" text-anchor="start">PR3</text>
<line x1="190.8" y1="102.6" x2="196.42" y2="95.58" stroke="#9cd49c" stroke-width="1.4" />
<polygon points="189.9,103.5 193.8,102.39999999999999 191.0,99.6" fill="#8ccc8c"/>
<circle cx="199.5" cy="92.5" r="4.4" fill="#fff" stroke="#86b486" stroke-width="0.8"/>
<text x="199.5" y="94.6" font-size="5.8" fill="#5f8f5f" text-anchor="middle">A</text>
<line x1="229.5" y1="102.6" x2="235.22" y2="95.58" stroke="#9cd49c" stroke-width="1.4" />
<polygon points="228.6,103.5 232.5,102.39999999999999 229.7,99.6" fill="#8ccc8c"/>
<circle cx="238.3" cy="92.5" r="4.4" fill="#fff" stroke="#86b486" stroke-width="0.8"/>
<text x="238.3" y="94.6" font-size="5.8" fill="#5f8f5f" text-anchor="middle">A</text>
<line x1="200.6" y1="123.4" x2="205.92" y2="116.48" stroke="#9cd49c" stroke-width="1.4" />
<polygon points="199.7,124.30000000000001 203.6,123.2 200.79999999999998,120.4" fill="#8ccc8c"/>
<circle cx="209.0" cy="113.4" r="4.4" fill="#fff" stroke="#86b486" stroke-width="0.8"/>
<text x="209.0" y="115.5" font-size="5.8" fill="#5f8f5f" text-anchor="middle">A</text>
<line x1="165.6" y1="382.2" x2="190.6" y2="382.2" stroke="#4a4a4a" stroke-width="0.9" />
<line x1="199.3" y1="382.2" x2="224.7" y2="382.2" stroke="#4a4a4a" stroke-width="0.9" />
<line x1="190.6" y1="382.2" x2="190.6" y2="370.5" stroke="#4a4a4a" stroke-width="0.9" />
<line x1="199.3" y1="382.2" x2="199.3" y2="370.5" stroke="#4a4a4a" stroke-width="0.9" />
<line x1="165.6" y1="382.2" x2="165.6" y2="410.1" stroke="#4a4a4a" stroke-width="0.9" />
<line x1="165.6" y1="419.3" x2="165.6" y2="442.2" stroke="#4a4a4a" stroke-width="0.9" />
<line x1="165.6" y1="442.2" x2="224.7" y2="442.2" stroke="#4a4a4a" stroke-width="0.9" />
<line x1="224.7" y1="382.2" x2="224.7" y2="406.5" stroke="#4a4a4a" stroke-width="0.9" />
<line x1="224.7" y1="419.3" x2="224.7" y2="442.2" stroke="#4a4a4a" stroke-width="0.9" />
<polyline points="224.70,406.50 222.10,407.30 227.30,408.90 222.10,410.50 227.30,412.10 222.10,413.70 227.30,415.30 222.10,416.90 227.30,418.50 224.70,419.30" stroke="#4a4a4a" stroke-width="0.9" fill="none" stroke-linejoin="miter"/>
<line x1="160.9" y1="410.1" x2="170.9" y2="410.1" stroke="#4a4a4a" stroke-width="0.9" />
<line x1="163" y1="413.2" x2="168.8" y2="413.2" stroke="#4a4a4a" stroke-width="0.9" />
<line x1="160.9" y1="416.3" x2="170.9" y2="416.3" stroke="#4a4a4a" stroke-width="0.9" />
<line x1="163" y1="419.3" x2="168.8" y2="419.3" stroke="#4a4a4a" stroke-width="0.9" />
<circle cx="224.7" cy="396.3" r="1.1" fill="#222"/>
<circle cx="224.7" cy="428.9" r="1.1" fill="#222"/>
<circle cx="194.8" cy="442.2" r="1.1" fill="#222"/>
<line x1="224.7" y1="396.3" x2="254.6" y2="396.3" stroke="#4a4a4a" stroke-width="0.9" />
<line x1="254.6" y1="396.3" x2="254.6" y2="379.7" stroke="#4a4a4a" stroke-width="0.9" />
<line x1="224.7" y1="428.9" x2="262.9" y2="428.9" stroke="#9a9a9a" stroke-width="0.9" />
<line x1="262.9" y1="428.9" x2="262.9" y2="379.7" stroke="#9a9a9a" stroke-width="1.0" />
<line x1="194.8" y1="442.2" x2="194.8" y2="446.9" stroke="#4a4a4a" stroke-width="0.9" />
<line x1="190.8" y1="446.9" x2="198.8" y2="446.9" stroke="#4a4a4a" stroke-width="0.9" />
<line x1="192.24" y1="449.5" x2="197.36" y2="449.5" stroke="#4a4a4a" stroke-width="0.9" />
<line x1="193.76000000000002" y1="452.09999999999997" x2="195.84" y2="452.09999999999997" stroke="#4a4a4a" stroke-width="0.9" />
<text x="171.8" y="408.79" font-size="6.3" font-weight="bold" fill="#1a1a1a" text-anchor="start">V2</text>
<text x="171.8" y="417.19" font-size="6.3" font-weight="bold" fill="#1a1a1a" text-anchor="start">12V</text>
<text x="227.6" y="406.79" font-size="6.3" font-weight="bold" fill="#1a1a1a" text-anchor="start">R2</text>
<text x="227.6" y="415.19" font-size="6.3" font-weight="bold" fill="#1a1a1a" text-anchor="start">1k&#937;</text>
<text x="187.6" y="349.94" font-size="5" font-weight="bold" fill="#1a1a1a" text-anchor="start">XMM2</text>
<text x="251.2" y="359.14" font-size="5" font-weight="bold" fill="#1a1a1a" text-anchor="start">XMM1</text>
<rect x="186.3" y="353.8" width="17" height="19.4" fill="#c4e3c4" stroke="#93c493" stroke-width="0.7"/>
<rect x="188.60000000000002" y="356.1" width="12.5" height="6" fill="#d5d5d5" stroke="#aaa" stroke-width="0.4"/>
<path d="M190.3 360.8 Q194.8 358.6 199.3 360.8" stroke="#666" stroke-width="0.4" fill="none"/>
<line x1="194.8" y1="361.3" x2="196.8" y2="357.3" stroke="#555" stroke-width="0.4" />
<text x="190.70000000000002" y="367.40000000000003" font-size="3.5" fill="#555" text-anchor="middle">+</text>
<text x="199.3" y="367.40000000000003" font-size="3.5" fill="#555" text-anchor="middle">&#8211;</text>
<circle cx="190.70000000000002" cy="370.5" r="1.2" fill="#888" stroke="#555" stroke-width="0.4"/>
<circle cx="199.3" cy="370.5" r="1.2" fill="#888" stroke="#555" stroke-width="0.4"/>
<rect x="250.2" y="363.0" width="17" height="19.4" fill="#c4e3c4" stroke="#93c493" stroke-width="0.7"/>
<rect x="252.5" y="365.3" width="12.5" height="6" fill="#d5d5d5" stroke="#aaa" stroke-width="0.4"/>
<path d="M254.2 370.0 Q258.7 367.8 263.2 370.0" stroke="#666" stroke-width="0.4" fill="none"/>
<line x1="258.7" y1="370.5" x2="260.7" y2="366.5" stroke="#555" stroke-width="0.4" />
<text x="254.6" y="376.6" font-size="3.5" fill="#555" text-anchor="middle">+</text>
<text x="263.2" y="376.6" font-size="3.5" fill="#555" text-anchor="middle">&#8211;</text>
<circle cx="254.6" cy="379.7" r="1.2" fill="#888" stroke="#555" stroke-width="0.4"/>
<circle cx="263.2" cy="379.7" r="1.2" fill="#888" stroke="#555" stroke-width="0.4"/>
<path d="M150.5 348.8 l2.2 2.2 M152.7 348.8 l-2.2 2.2" stroke="#fff" stroke-width="0.7"/>
<path d="M317.7 385.0 l2.2 2.2 M319.90000000000003 385.0 l-2.2 2.2" stroke="#fff" stroke-width="0.7"/>
<line x1="490.6" y1="269.6" x2="519.4" y2="269.6" stroke="#4a4a4a" stroke-width="0.9" />
<line x1="533.9" y1="269.6" x2="558.4" y2="269.6" stroke="#4a4a4a" stroke-width="0.9" />
<polyline points="519.40,269.60 520.31,267.40 522.12,271.80 523.93,267.40 525.74,271.80 527.56,267.40 529.37,271.80 531.18,267.40 532.99,271.80 533.90,269.60" stroke="#4a4a4a" stroke-width="0.9" fill="none" stroke-linejoin="miter"/>
<line x1="490.6" y1="269.6" x2="490.6" y2="297.9" stroke="#4a4a4a" stroke-width="0.9" />
<line x1="490.6" y1="316.5" x2="490.6" y2="333.0" stroke="#4a4a4a" stroke-width="0.9" />
<circle cx="490.6" cy="307.2" r="9.3" fill="none" stroke="#4a4a4a" stroke-width="0.9"/>
<path d="M486.40000000000003 307.6 Q488.5 304.6 490.6 307.2 T494.8 306.8" stroke="#4a4a4a" stroke-width="0.8" fill="none"/>
<text x="490.6" y="302.8" font-size="4.5" fill="#333" text-anchor="middle">+</text>
<text x="490.6" y="315.2" font-size="4.5" fill="#333" text-anchor="middle">&#8211;</text>
<line x1="558.4" y1="269.6" x2="558.4" y2="307.2" stroke="#4a4a4a" stroke-width="0.9" />
<line x1="558.4" y1="321.5" x2="558.4" y2="333.0" stroke="#4a4a4a" stroke-width="0.9" />
<path d="M558.4 307.2 a1.79 1.79 0 0 1 0 3.575 a1.79 1.79 0 0 1 0 3.575 a1.79 1.79 0 0 1 0 3.575 a1.79 1.79 0 0 1 0 3.575 " stroke="#4a4a4a" stroke-width="0.85" fill="none"/>
<line x1="490.6" y1="333.0" x2="558.4" y2="333.0" stroke="#4a4a4a" stroke-width="0.9" />
<circle cx="490.6" cy="333.0" r="1.1" fill="#222"/>
<line x1="490.6" y1="333.0" x2="490.6" y2="348.5" stroke="#4a4a4a" stroke-width="0.9" />
<line x1="485.6" y1="348.7" x2="495.6" y2="348.7" stroke="#4a4a4a" stroke-width="0.9" />
<line x1="487.40000000000003" y1="351.3" x2="493.8" y2="351.3" stroke="#4a4a4a" stroke-width="0.9" />
<line x1="489.3" y1="353.9" x2="491.90000000000003" y2="353.9" stroke="#4a4a4a" stroke-width="0.9" />
<text x="521.2" y="262.90" font-size="7" font-weight="bold" fill="#1a1a1a" text-anchor="start">R1</text>
<text x="519.8" y="278.90" font-size="7" font-weight="bold" fill="#1a1a1a" text-anchor="start">1k&#937;</text>
<text x="500.4" y="291.30" font-size="7" font-weight="bold" fill="#1a1a1a" text-anchor="start">V1</text>
<text x="500.4" y="301.50" font-size="7" font-weight="bold" fill="#1a1a1a" text-anchor="start">5Vrms</text>
<text x="500.4" y="309.30" font-size="7" font-weight="bold" fill="#1a1a1a" text-anchor="start">20KHz</text>
<text x="500.4" y="319.10" font-size="7" font-weight="bold" fill="#1a1a1a" text-anchor="start">0&#176;</text>
<text x="561.7" y="307.50" font-size="7" font-weight="bold" fill="#1a1a1a" text-anchor="start">L1</text>
<text x="561.7" y="318.30" font-size="7" font-weight="bold" fill="#1a1a1a" text-anchor="start">10mH</text>
<text x="573.8" y="273.70" font-size="7" font-weight="bold" fill="#1a1a1a" text-anchor="start">IL</text>
<text x="573.8" y="295.10" font-size="7" font-weight="bold" fill="#1a1a1a" text-anchor="start">VL</text>
<text x="573.8" y="331.60" font-size="7" font-weight="bold" fill="#1a1a1a" text-anchor="start">Ref1</text>
<line x1="557.6" y1="276.0" x2="562.24" y2="268.96000000000004" stroke="#9cd49c" stroke-width="1.4" />
<polygon points="556.7,276.9 560.6,275.8 557.8000000000001,273.0" fill="#8ccc8c"/>
<circle cx="564.9" cy="266.3" r="3.8" fill="#fff" stroke="#86b486" stroke-width="0.8"/>
<text x="564.9" y="268.40000000000003" font-size="5.8" fill="#5f8f5f" text-anchor="middle">A</text>
<line x1="557.6" y1="297.4" x2="562.24" y2="290.36" stroke="#9cd49c" stroke-width="1.4" />
<polygon points="556.7,298.29999999999995 560.6,297.2 557.8000000000001,294.4" fill="#8ccc8c"/>
<circle cx="564.9" cy="287.7" r="3.8" fill="#fff" stroke="#86b486" stroke-width="0.8"/>
<text x="564.9" y="289.8" font-size="5.8" fill="#5f8f5f" text-anchor="middle">V</text>
<line x1="558.0" y1="334.0" x2="562.84" y2="326.96000000000004" stroke="#9cd49c" stroke-width="1.4" />
<polygon points="557.1,334.9 561.0,333.8 558.2,331.0" fill="#8ccc8c"/>
<circle cx="565.5" cy="324.3" r="3.8" fill="#3f8f4f" stroke="#3f8f4f" stroke-width="0.8"/>
<text x="565.5" y="326.40000000000003" font-size="5.8" font-weight="bold" fill="#fff" text-anchor="middle">V</text>
<path d="M819.9 229.70000000000002 l2.3 2.3 M822.2 229.70000000000002 l-2.3 2.3" stroke="#fff" stroke-width="0.75"/>
<rect x="806.9" y="229.8" width="2.6" height="2.4" fill="none" stroke="#3a3a3a" stroke-width="0.5"/><rect x="806.9" y="229.60000000000002" width="2.6" height="0.7" fill="#3a3a3a"/>
<g transform="translate(616.40,245.1)"><path d="M0.2 1.2 h1.6 l0.5 0.5 h2 v2.6 h-4.1z" fill="#a9b040"/><path d="M1.6 3.6 L4.2 0.6" stroke="#444" stroke-width="0.8"/></g>
<g transform="translate(622.90,245.1)"><rect x="0.8" y="0.3" width="2.8" height="3" fill="#f2f0a0"/><rect x="0.6" y="3.2" width="3.2" height="1" fill="#333"/></g>
<g transform="translate(630.20,245.1)"><path d="M3.8 3.4 A1.6 1.6 0 0 0 1 1.6" stroke="#c8c8c8" stroke-width="0.8" fill="none"/></g>
<g transform="translate(636.40,245.1)"><path d="M0.6 0.6 L3.6 3.6 M0.6 3.6 L3.6 0.6" stroke="#333" stroke-width="0.7"/></g>
<g transform="translate(642.90,245.1)"><rect x="0.6" y="0.4" width="2" height="2.8" fill="#7070b0"/><rect x="2" y="1.4" width="2" height="2.8" fill="#5a5a9a"/></g>
<g transform="translate(649.20,245.1)"><circle cx="2.1" cy="2.1" r="1.5" fill="#d6d6d6"/></g>
<g transform="translate(656.80,245.1)"><rect x="0.3" y="0.3" width="3.8" height="3.8" rx="0.8" fill="#e03050"/></g>
<g transform="translate(663.30,245.1)"><rect x="0.3" y="0.3" width="3.8" height="3.8" fill="#70c8a0" stroke="#2a5a6a" stroke-width="0.6"/></g>
<g transform="translate(669.20,245.1)"><rect x="0.6" y="1" width="1" height="3.2" fill="#c04040"/><rect x="2.4" y="0.4" width="1" height="3.8" fill="#a05050"/></g>
<g transform="translate(675.50,245.1)"><circle cx="2.1" cy="2.2" r="1.9" fill="#111"/><circle cx="1.4" cy="1.5" r="0.7" fill="#ccc"/></g>
<g transform="translate(683.30,245.1)"><path d="M0.4 4 L2.1 0.4 L3.8 4" stroke="#d070a0" stroke-width="0.7" fill="none"/></g>
<g transform="translate(689.20,245.1)"><circle cx="0.8" cy="3.2" r="0.7" fill="#f03040"/><circle cx="2.1" cy="1.2" r="0.7" fill="#f03040"/><circle cx="3.4" cy="3.2" r="0.7" fill="#f03040"/></g>
<g transform="translate(695.80,245.1)"><circle cx="0.6" cy="3.4" r="0.8" fill="#f03040"/><circle cx="2.1" cy="1.4" r="0.8" fill="#f03040"/><circle cx="3.6" cy="3.4" r="0.8" fill="#f03040"/></g>
<g transform="translate(703.00,245.1)"><circle cx="1.8" cy="1.8" r="1.4" fill="#e0b0b0" stroke="#a06060" stroke-width="0.6"/><rect x="2.8" y="2.8" width="1.4" height="1.4" fill="#3a3aa0"/></g>
<g transform="translate(709.30,245.1)"><circle cx="1.8" cy="1.8" r="1.4" fill="#b0d8b0" stroke="#70a070" stroke-width="0.6"/><rect x="2.8" y="2.8" width="1.4" height="1.4" fill="#3a3aa0"/></g>
<g transform="translate(715.50,245.1)"><path d="M0.4 4 L3.8 0.4 M1 1 L3.4 3.4" stroke="#444" stroke-width="0.6"/></g>
<g transform="translate(722.20,245.1)"><circle cx="2" cy="2" r="1.6" fill="#8a8ad8" stroke="#4a4aa0" stroke-width="0.5"/><rect x="2.6" y="2.8" width="1.4" height="1.3" fill="#5a7a40"/></g>
<g transform="translate(728.50,245.1)"><circle cx="2" cy="2" r="1.6" fill="#8a8ad8" stroke="#4a4aa0" stroke-width="0.5"/><rect x="2.6" y="2.8" width="1.4" height="1.3" fill="#5a7a40"/></g>
<g transform="translate(735.20,245.1)"><circle cx="2" cy="2" r="1.6" fill="#8a8ad8" stroke="#4a4aa0" stroke-width="0.5"/><rect x="2.6" y="2.8" width="1.4" height="1.3" fill="#5a7a40"/></g>
<g transform="translate(740.80,245.1)"><path d="M3.4 0.8 A1.8 1.8 0 1 0 3.4 3.6" stroke="#5a5ab0" stroke-width="0.8" fill="none"/></g>
<g transform="translate(748.40,245.1)"><path d="M0.8 4 L2.1 0.6 L3.4 4" stroke="#333" stroke-width="0.7" fill="none"/></g>
<g transform="translate(762.10,245.1)"><rect x="0.6" y="1" width="3" height="2.4" rx="1" fill="#c090e0"/></g>
<g transform="translate(768.20,245.1)"><rect x="0.6" y="0.4" width="1.8" height="3.8" fill="#333"/><path d="M2.4 0.8 L4 2.2 L2.4 3.8z" fill="#e04050"/></g>
<g transform="translate(775.40,245.1)"><rect x="0.6" y="0.4" width="3" height="3.6" fill="#e8f0f0" stroke="#2a9ab0" stroke-width="0.6"/></g>
<g transform="translate(781.90,245.1)"><circle cx="2.1" cy="2.1" r="1.9" fill="#e0c020"/><path d="M0.3 2.1 A1.9 1.9 0 0 1 2.1 0.2 V2.1z" fill="#3a8ad0"/></g>
<g transform="translate(789.50,245.1)"><circle cx="2.1" cy="2.1" r="1.2" fill="#999"/></g>
<line x1="628.8" y1="265.2" x2="628.8" y2="358.6" stroke="#3a3a3a" stroke-width="0.6" />
<line x1="647.18" y1="265.2" x2="647.18" y2="358.6" stroke="#3a3a3a" stroke-width="0.6" />
<line x1="665.56" y1="265.2" x2="665.56" y2="358.6" stroke="#3a3a3a" stroke-width="0.6" />
<line x1="683.9399999999999" y1="265.2" x2="683.9399999999999" y2="358.6" stroke="#3a3a3a" stroke-width="0.6" />
<line x1="702.3199999999999" y1="265.2" x2="702.3199999999999" y2="358.6" stroke="#3a3a3a" stroke-width="0.6" />
<line x1="720.7" y1="265.2" x2="720.7" y2="358.6" stroke="#3a3a3a" stroke-width="0.6" />
<line x1="739.08" y1="265.2" x2="739.08" y2="358.6" stroke="#3a3a3a" stroke-width="0.6" />
<line x1="757.46" y1="265.2" x2="757.46" y2="358.6" stroke="#3a3a3a" stroke-width="0.6" />
<line x1="775.84" y1="265.2" x2="775.84" y2="358.6" stroke="#3a3a3a" stroke-width="0.6" />
<line x1="794.22" y1="265.2" x2="794.22" y2="358.6" stroke="#3a3a3a" stroke-width="0.6" />
<line x1="812.6" y1="265.2" x2="812.6" y2="358.6" stroke="#3a3a3a" stroke-width="0.6" />
<line x1="628.8" y1="265.2" x2="812.6" y2="265.2" stroke="#3a3a3a" stroke-width="0.6" />
<line x1="628.8" y1="276.875" x2="812.6" y2="276.875" stroke="#3a3a3a" stroke-width="0.6" />
<line x1="628.8" y1="288.55" x2="812.6" y2="288.55" stroke="#3a3a3a" stroke-width="0.6" />
<line x1="628.8" y1="300.225" x2="812.6" y2="300.225" stroke="#3a3a3a" stroke-width="0.6" />
<line x1="628.8" y1="311.9" x2="812.6" y2="311.9" stroke="#3a3a3a" stroke-width="0.6" />
<line x1="628.8" y1="323.575" x2="812.6" y2="323.575" stroke="#3a3a3a" stroke-width="0.6" />
<line x1="628.8" y1="335.25" x2="812.6" y2="335.25" stroke="#3a3a3a" stroke-width="0.6" />
<line x1="628.8" y1="346.925" x2="812.6" y2="346.925" stroke="#3a3a3a" stroke-width="0.6" />
<line x1="628.8" y1="358.6" x2="812.6" y2="358.6" stroke="#3a3a3a" stroke-width="0.6" />
<line x1="628.8" y1="264.2" x2="628.8" y2="358.6" stroke="#8a8a8a" stroke-width="0.6" />
<line x1="628.8" y1="358.6" x2="812.6" y2="358.6" stroke="#8a8a8a" stroke-width="0.6" />
<line x1="812.6" y1="264.2" x2="812.6" y2="358.6" stroke="#8a8a8a" stroke-width="0.6" />
<text x="721.5" y="263.4" font-size="6" fill="#fff" text-anchor="middle">Transient</text>
<text x="625.8" y="266.59999999999997" font-size="4" fill="#ccc" text-anchor="end">8</text>
<text x="815.4" y="266.5" font-size="3.4" fill="#ccc">6m</text>
<text x="625.8" y="278.275" font-size="4" fill="#ccc" text-anchor="end">6</text>
<text x="815.4" y="278.175" font-size="3.4" fill="#ccc">5m</text>
<text x="625.8" y="289.95" font-size="4" fill="#ccc" text-anchor="end">4</text>
<text x="815.4" y="289.85" font-size="3.4" fill="#ccc">3m</text>
<text x="625.8" y="301.625" font-size="4" fill="#ccc" text-anchor="end">2</text>
<text x="815.4" y="301.52500000000003" font-size="3.4" fill="#ccc">1m</text>
<text x="625.8" y="313.29999999999995" font-size="4" fill="#ccc" text-anchor="end">0</text>
<text x="815.4" y="313.2" font-size="3.4" fill="#ccc">0m</text>
<text x="625.8" y="324.97499999999997" font-size="4" fill="#ccc" text-anchor="end">-2</text>
<text x="815.4" y="324.875" font-size="3.4" fill="#ccc">-1m</text>
<text x="625.8" y="336.65" font-size="4" fill="#ccc" text-anchor="end">-4</text>
<text x="815.4" y="336.55" font-size="3.4" fill="#ccc">-3m</text>
<text x="625.8" y="348.325" font-size="4" fill="#ccc" text-anchor="end">-6</text>
<text x="815.4" y="348.225" font-size="3.4" fill="#ccc">-5m</text>
<text x="625.8" y="360.0" font-size="4" fill="#ccc" text-anchor="end">-8</text>
<text x="815.4" y="359.90000000000003" font-size="3.4" fill="#ccc">-6m</text>
<text x="628.8" y="364.8" font-size="4" fill="#ccc" text-anchor="middle">0p</text>
<text x="665.56" y="364.8" font-size="4" fill="#ccc" text-anchor="middle">20p</text>
<text x="702.3199999999999" y="364.8" font-size="4" fill="#ccc" text-anchor="middle">40p</text>
<text x="739.08" y="364.8" font-size="4" fill="#ccc" text-anchor="middle">60p</text>
<text x="775.84" y="364.8" font-size="4" fill="#ccc" text-anchor="middle">80p</text>
<text x="812.6" y="364.8" font-size="4" fill="#ccc" text-anchor="middle">100p</text>
<text x="720.7" y="370.6" font-size="4.4" fill="#eee" text-anchor="middle">Time (s)</text>
<text x="0" y="0" font-size="4.6" fill="#eee" text-anchor="middle" transform="translate(622.4,312.9) rotate(-90)">Voltage (V)</text>
<text x="0" y="0" font-size="4.6" fill="#eee" text-anchor="middle" transform="translate(820.6,312.9) rotate(90)">Current (A)</text>
<polyline points="628.80,311.90 629.26,311.88 629.72,311.82 630.18,311.71 630.64,311.57 631.10,311.38 631.56,311.16 632.02,310.90 632.48,310.61 632.94,310.28 633.39,309.93 633.85,309.53 634.31,309.11 634.77,308.66 635.23,308.18 635.69,307.68 636.15,307.14 636.61,306.59 637.07,306.01 637.53,305.41 637.99,304.79 638.45,304.15 638.91,303.49 639.37,302.81 639.83,302.12 640.29,301.42 640.75,300.70 641.21,299.98 641.67,299.24 642.13,298.49 642.58,297.73 643.04,296.97 643.50,296.20 643.96,295.43 644.42,294.66 644.88,293.89 645.34,293.11 645.80,292.34 646.26,291.56 646.72,290.79 647.18,290.03 647.64,289.27 648.10,288.52 648.56,287.78 649.02,287.04 649.48,286.32 649.94,285.60 650.40,284.90 650.86,284.21 651.32,283.54 651.77,282.88 652.23,282.24 652.69,281.62 653.15,281.01 653.61,280.42 654.07,279.85 654.53,279.31 654.99,278.78 655.45,278.28 655.91,277.80 656.37,277.34 656.83,276.91 657.29,276.50 657.75,276.12 658.21,275.77 658.67,275.44 659.13,275.14 659.59,274.87 660.05,274.62 660.51,274.41 660.96,274.22 661.42,274.06 661.88,273.94 662.34,273.84 662.80,273.78 663.26,273.74 663.72,273.74 664.18,273.77 664.64,273.83 665.10,273.92 665.56,274.04 666.02,274.19 666.48,274.38 666.94,274.60 667.40,274.84 667.86,275.12 668.32,275.43 668.78,275.77 669.24,276.15 669.70,276.55 670.15,276.98 670.61,277.44 671.07,277.94 671.53,278.46 671.99,279.01 672.45,279.59 672.91,280.19 673.37,280.83 673.83,281.49 674.29,282.18 674.75,282.89 675.21,283.63 675.67,284.39 676.13,285.17 676.59,285.98 677.05,286.81 677.51,287.67 677.97,288.54 678.43,289.44 678.89,290.35 679.35,291.28 679.80,292.23 680.26,293.20 680.72,294.18 681.18,295.17 681.64,296.18 682.10,297.21 682.56,298.24 683.02,299.29 683.48,300.35 683.94,301.42 684.40,302.49 684.86,303.57 685.32,304.66 685.78,305.75 686.24,306.85 686.70,307.95 687.16,309.05 687.62,310.16 688.08,311.26 688.53,312.36 688.99,313.46 689.45,314.56 689.91,315.65 690.37,316.74 690.83,317.82 691.29,318.89 691.75,319.96 692.21,321.02 692.67,322.06 693.13,323.10 693.59,324.12 694.05,325.13 694.51,326.12 694.97,327.10 695.43,328.06 695.89,329.01 696.35,329.94 696.81,330.85 697.27,331.74 697.73,332.61 698.18,333.45 698.64,334.28 699.10,335.08 699.56,335.86 700.02,336.61 700.48,337.34 700.94,338.04 701.40,338.72 701.86,339.37 702.32,339.99 702.78,340.58 703.24,341.14 703.70,341.67 704.16,342.18 704.62,342.65 705.08,343.09 705.54,343.50 706.00,343.88 706.46,344.22 706.91,344.54 707.37,344.82 707.83,345.07 708.29,345.28 708.75,345.46 709.21,345.61 709.67,345.72 710.13,345.80 710.59,345.85 711.05,345.86 711.51,345.83 711.97,345.78 712.43,345.69 712.89,345.56 713.35,345.40 713.81,345.21 714.27,344.99 714.73,344.73 715.19,344.44 715.65,344.12 716.11,343.76 716.56,343.37 717.02,342.95 717.48,342.50 717.94,342.02 718.40,341.51 718.86,340.97 719.32,340.41 719.78,339.81 720.24,339.18 720.70,338.53 721.16,337.85 721.62,337.15 722.08,336.42 722.54,335.66 723.00,334.88 723.46,334.08 723.92,333.26 724.38,332.42 724.84,331.55 725.29,330.67 725.75,329.76 726.21,328.84 726.67,327.90 727.13,326.95 727.59,325.98 728.05,325.00 728.51,324.00 728.97,322.99 729.43,321.97 729.89,320.94 730.35,319.90 730.81,318.85 731.27,317.80 731.73,316.74 732.19,315.68 732.65,314.61 733.11,313.53 733.57,312.46 734.03,311.39 734.49,310.31 734.94,309.24 735.40,308.17 735.86,307.10 736.32,306.04 736.78,304.99 737.24,303.94 737.70,302.90 738.16,301.86 738.62,300.84 739.08,299.83 739.54,298.83 740.00,297.84 740.46,296.87 740.92,295.91 741.38,294.96 741.84,294.04 742.30,293.13 742.76,292.24 743.22,291.36 743.67,290.51 744.13,289.68 744.59,288.87 745.05,288.09 745.51,287.33 745.97,286.59 746.43,285.87 746.89,285.19 747.35,284.52 747.81,283.89 748.27,283.28 748.73,282.70 749.19,282.15 749.65,281.63 750.11,281.14 750.57,280.68 751.03,280.25 751.49,279.85 751.95,279.49 752.41,279.15 752.87,278.85 753.32,278.58 753.78,278.34 754.24,278.14 754.70,277.96 755.16,277.83 755.62,277.72 756.08,277.65 756.54,277.62 757.00,277.61 757.46,277.64 757.92,277.71 758.38,277.81 758.84,277.94 759.30,278.10 759.76,278.30 760.22,278.53 760.68,278.80 761.14,279.10 761.60,279.43 762.06,279.79 762.51,280.18 762.97,280.61 763.43,281.06 763.89,281.55 764.35,282.06 764.81,282.61 765.27,283.18 765.73,283.79 766.19,284.42 766.65,285.07 767.11,285.76 767.57,286.47 768.03,287.20 768.49,287.96 768.95,288.74 769.41,289.55 769.87,290.38 770.33,291.22 770.79,292.09 771.25,292.98 771.70,293.89 772.16,294.81 772.62,295.76 773.08,296.71 773.54,297.69 774.00,298.67 774.46,299.67 774.92,300.69 775.38,301.71 775.84,302.74 776.30,303.78 776.76,304.83 777.22,305.89 777.68,306.95 778.14,308.02 778.60,309.09 779.06,310.17 779.52,311.24 779.98,312.32 780.43,313.39 780.89,314.47 781.35,315.54 781.81,316.61 782.27,317.67 782.73,318.73 783.19,319.78 783.65,320.83 784.11,321.86 784.57,322.89 785.03,323.90 785.49,324.90 785.95,325.89 786.41,326.87 786.87,327.83 787.33,328.77 787.79,329.70 788.25,330.61 788.71,331.51 789.17,332.38 789.62,333.23 790.08,334.06 790.54,334.87 791.00,335.66 791.46,336.42 791.92,337.16 792.38,337.88 792.84,338.57 793.30,339.23 793.76,339.87 794.22,340.47 794.68,341.05 795.14,341.60 795.60,342.13 796.06,342.62 796.52,343.08 796.98,343.51 797.44,343.91 797.90,344.28 798.36,344.61 798.82,344.92 799.27,345.19 799.73,345.43 800.19,345.63 800.65,345.80 801.11,345.94 801.57,346.05 802.03,346.12 802.49,346.16 802.95,346.16 803.41,346.13 803.87,346.07 804.33,345.97 804.79,345.84 805.25,345.67 805.71,345.47 806.17,345.24 806.63,344.98 807.09,344.68 807.55,344.35 808.00,343.99 808.46,343.60 808.92,343.17 809.38,342.72 809.84,342.23 810.30,341.72 810.76,341.17 811.22,340.60 811.68,340.00 812.14,339.37 812.60,338.71" stroke="#761822" stroke-width="1.0" fill="none" stroke-linejoin="miter"/>
<polyline points="628.80,311.90 629.26,310.62 629.72,309.37 630.18,308.16 630.64,306.98 631.10,305.83 631.56,304.72 632.02,303.64 632.48,302.60 632.94,301.60 633.39,300.63 633.85,299.69 634.31,298.80 634.77,297.94 635.23,297.12 635.69,296.33 636.15,295.58 636.61,294.88 637.07,294.20 637.53,293.57 637.99,292.98 638.45,292.42 638.91,291.90 639.37,291.42 639.83,290.98 640.29,290.58 640.75,290.21 641.21,289.89 641.67,289.60 642.13,289.35 642.58,289.14 643.04,288.96 643.50,288.83 643.96,288.73 644.42,288.66 644.88,288.64 645.34,288.65 645.80,288.70 646.26,288.78 646.72,288.90 647.18,289.05 647.64,289.24 648.10,289.46 648.56,289.72 649.02,290.00 649.48,290.32 649.94,290.68 650.40,291.06 650.86,291.47 651.32,291.92 651.77,292.39 652.23,292.89 652.69,293.42 653.15,293.98 653.61,294.56 654.07,295.17 654.53,295.81 654.99,296.46 655.45,297.14 655.91,297.84 656.37,298.57 656.83,299.31 657.29,300.08 657.75,300.86 658.21,301.66 658.67,302.47 659.13,303.31 659.59,304.15 660.05,305.01 660.51,305.89 660.96,306.77 661.42,307.67 661.88,308.57 662.34,309.49 662.80,310.41 663.26,311.33 663.72,312.27 664.18,313.21 664.64,314.15 665.10,315.09 665.56,316.04 666.02,316.98 666.48,317.93 666.94,318.87 667.40,319.81 667.86,320.75 668.32,321.68 668.78,322.60 669.24,323.52 669.70,324.43 670.15,325.34 670.61,326.23 671.07,327.11 671.53,327.98 671.99,328.84 672.45,329.68 672.91,330.51 673.37,331.32 673.83,332.12 674.29,332.90 674.75,333.66 675.21,334.40 675.67,335.13 676.13,335.83 676.59,336.51 677.05,337.17 677.51,337.81 677.97,338.42 678.43,339.01 678.89,339.58 679.35,340.12 679.80,340.63 680.26,341.12 680.72,341.58 681.18,342.02 681.64,342.42 682.10,342.80 682.56,343.15 683.02,343.47 683.48,343.76 683.94,344.02 684.40,344.25 684.86,344.45 685.32,344.62 685.78,344.76 686.24,344.87 686.70,344.95 687.16,344.99 687.62,345.01 688.08,344.99 688.53,344.94 688.99,344.86 689.45,344.75 689.91,344.61 690.37,344.44 690.83,344.23 691.29,344.00 691.75,343.73 692.21,343.44 692.67,343.11 693.13,342.75 693.59,342.37 694.05,341.95 694.51,341.51 694.97,341.04 695.43,340.54 695.89,340.01 696.35,339.46 696.81,338.88 697.27,338.27 697.73,337.64 698.18,336.99 698.64,336.31 699.10,335.60 699.56,334.88 700.02,334.13 700.48,333.36 700.94,332.57 701.40,331.76 701.86,330.93 702.32,330.09 702.78,329.22 703.24,328.34 703.70,327.45 704.16,326.54 704.62,325.61 705.08,324.67 705.54,323.72 706.00,322.76 706.46,321.79 706.91,320.81 707.37,319.82 707.83,318.83 708.29,317.82 708.75,316.81 709.21,315.80 709.67,314.79 710.13,313.77 710.59,312.75 711.05,311.73 711.51,310.71 711.97,309.69 712.43,308.67 712.89,307.66 713.35,306.65 713.81,305.65 714.27,304.66 714.73,303.67 715.19,302.69 715.65,301.72 716.11,300.76 716.56,299.81 717.02,298.87 717.48,297.95 717.94,297.04 718.40,296.15 718.86,295.27 719.32,294.40 719.78,293.56 720.24,292.73 720.70,291.93 721.16,291.14 721.62,290.37 722.08,289.63 722.54,288.91 723.00,288.21 723.46,287.53 723.92,286.88 724.38,286.25 724.84,285.65 725.29,285.07 725.75,284.52 726.21,284.00 726.67,283.51 727.13,283.04 727.59,282.60 728.05,282.20 728.51,281.82 728.97,281.47 729.43,281.15 729.89,280.86 730.35,280.60 730.81,280.38 731.27,280.18 731.73,280.02 732.19,279.89 732.65,279.78 733.11,279.72 733.57,279.68 734.03,279.67 734.49,279.70 734.94,279.76 735.40,279.85 735.86,279.97 736.32,280.13 736.78,280.31 737.24,280.53 737.70,280.78 738.16,281.06 738.62,281.36 739.08,281.70 739.54,282.07 740.00,282.47 740.46,282.90 740.92,283.36 741.38,283.84 741.84,284.35 742.30,284.89 742.76,285.46 743.22,286.05 743.67,286.67 744.13,287.31 744.59,287.98 745.05,288.67 745.51,289.39 745.97,290.12 746.43,290.88 746.89,291.66 747.35,292.46 747.81,293.28 748.27,294.11 748.73,294.97 749.19,295.84 749.65,296.72 750.11,297.62 750.57,298.54 751.03,299.47 751.49,300.41 751.95,301.36 752.41,302.33 752.87,303.30 753.32,304.28 753.78,305.27 754.24,306.27 754.70,307.27 755.16,308.27 755.62,309.28 756.08,310.29 756.54,311.31 757.00,312.32 757.46,313.33 757.92,314.35 758.38,315.36 758.84,316.36 759.30,317.36 759.76,318.36 760.22,319.35 760.68,320.33 761.14,321.31 761.60,322.27 762.06,323.23 762.51,324.17 762.97,325.11 763.43,326.03 763.89,326.93 764.35,327.82 764.81,328.70 765.27,329.55 765.73,330.39 766.19,331.22 766.65,332.02 767.11,332.80 767.57,333.57 768.03,334.31 768.49,335.03 768.95,335.72 769.41,336.40 769.87,337.05 770.33,337.67 770.79,338.27 771.25,338.84 771.70,339.39 772.16,339.91 772.62,340.40 773.08,340.86 773.54,341.30 774.00,341.70 774.46,342.08 774.92,342.43 775.38,342.74 775.84,343.03 776.30,343.28 776.76,343.51 777.22,343.70 777.68,343.86 778.14,343.99 778.60,344.09 779.06,344.16 779.52,344.19 779.98,344.20 780.43,344.17 780.89,344.11 781.35,344.02 781.81,343.89 782.27,343.74 782.73,343.55 783.19,343.33 783.65,343.08 784.11,342.80 784.57,342.49 785.03,342.15 785.49,341.78 785.95,341.38 786.41,340.95 786.87,340.49 787.33,340.01 787.79,339.49 788.25,338.95 788.71,338.39 789.17,337.79 789.62,337.17 790.08,336.53 790.54,335.86 791.00,335.17 791.46,334.45 791.92,333.72 792.38,332.96 792.84,332.18 793.30,331.38 793.76,330.56 794.22,329.72 794.68,328.87 795.14,327.99 795.60,327.11 796.06,326.20 796.52,325.29 796.98,324.36 797.44,323.42 797.90,322.46 798.36,321.50 798.82,320.53 799.27,319.54 799.73,318.55 800.19,317.56 800.65,316.56 801.11,315.55 801.57,314.54 802.03,313.53 802.49,312.51 802.95,311.50 803.41,310.49 803.87,309.47 804.33,308.46 804.79,307.46 805.25,306.45 805.71,305.46 806.17,304.47 806.63,303.48 807.09,302.51 807.55,301.54 808.00,300.59 808.46,299.64 808.92,298.71 809.38,297.79 809.84,296.88 810.30,295.99 810.76,295.12 811.22,294.26 811.68,293.42 812.14,292.60 812.60,291.79" stroke="#1d5424" stroke-width="1.0" fill="none" stroke-linejoin="miter"/>
<rect x="629.3865999999999" y="307.6983517713099" width="1.4" height="1.4" fill="#ddd"/>
<rect x="642.2525999999999" y="288.29354174908366" width="1.4" height="1.4" fill="#ddd"/>
<rect x="655.1185999999999" y="297.00248055090134" width="1.4" height="1.4" fill="#ddd"/>
<rect x="667.9845999999999" y="321.7190418992889" width="1.4" height="1.4" fill="#ddd"/>
<rect x="680.8506" y="341.6443244350691" width="1.4" height="1.4" fill="#ddd"/>
<rect x="693.7166" y="340.9014702161928" width="1.4" height="1.4" fill="#ddd"/>
<rect x="706.5826" y="319.3200381372951" width="1.4" height="1.4" fill="#ddd"/>
<rect x="719.4485999999999" y="292.1977070449589" width="1.4" height="1.4" fill="#ddd"/>
<rect x="732.3145999999999" y="279.0274224680589" width="1.4" height="1.4" fill="#ddd"/>
<rect x="745.1805999999999" y="289.27280616633897" width="1.4" height="1.4" fill="#ddd"/>
<rect x="758.0465999999999" y="315.4612756152626" width="1.4" height="1.4" fill="#ddd"/>
<rect x="770.9126" y="338.5807956105856" width="1.4" height="1.4" fill="#ddd"/>
<rect x="783.7786" y="341.8555658010818" width="1.4" height="1.4" fill="#ddd"/>
<rect x="796.6446" y="322.9055994205491" width="1.4" height="1.4" fill="#ddd"/>
<rect x="809.5106" y="295.4698806368064" width="1.4" height="1.4" fill="#ddd"/>
<rect x="619.4" y="376.8" width="2.2" height="2.6" fill="#ddd"/>
<text x="623.3" y="375.6" font-size="2.8" fill="#bbb">I(L1)</text>
<text x="623.3" y="380.8" font-size="2.8" fill="#bbb">I(L)</text>
<line x1="623" y1="377" x2="632.5" y2="377" stroke="#a01010" stroke-width="0.6" />
<rect x="638.2" y="376.8" width="2.2" height="2.6" fill="#ddd"/>
<rect x="636.0" y="376.2" width="1.2" height="3.8" fill="#e01010"/>
<text x="641.5" y="375.6" font-size="2.8" fill="#bbb">V(3)</text>
<text x="641.5" y="380.8" font-size="2.8" fill="#bbb">V(VL)</text>
<line x1="641.5" y1="377" x2="651" y2="377" stroke="#1a8a1a" stroke-width="0.6" />
<polygon points="615.2,317.4 617.6,319.3 615.2,321.2" fill="#e01010"/>
</svg>
</body></html>
